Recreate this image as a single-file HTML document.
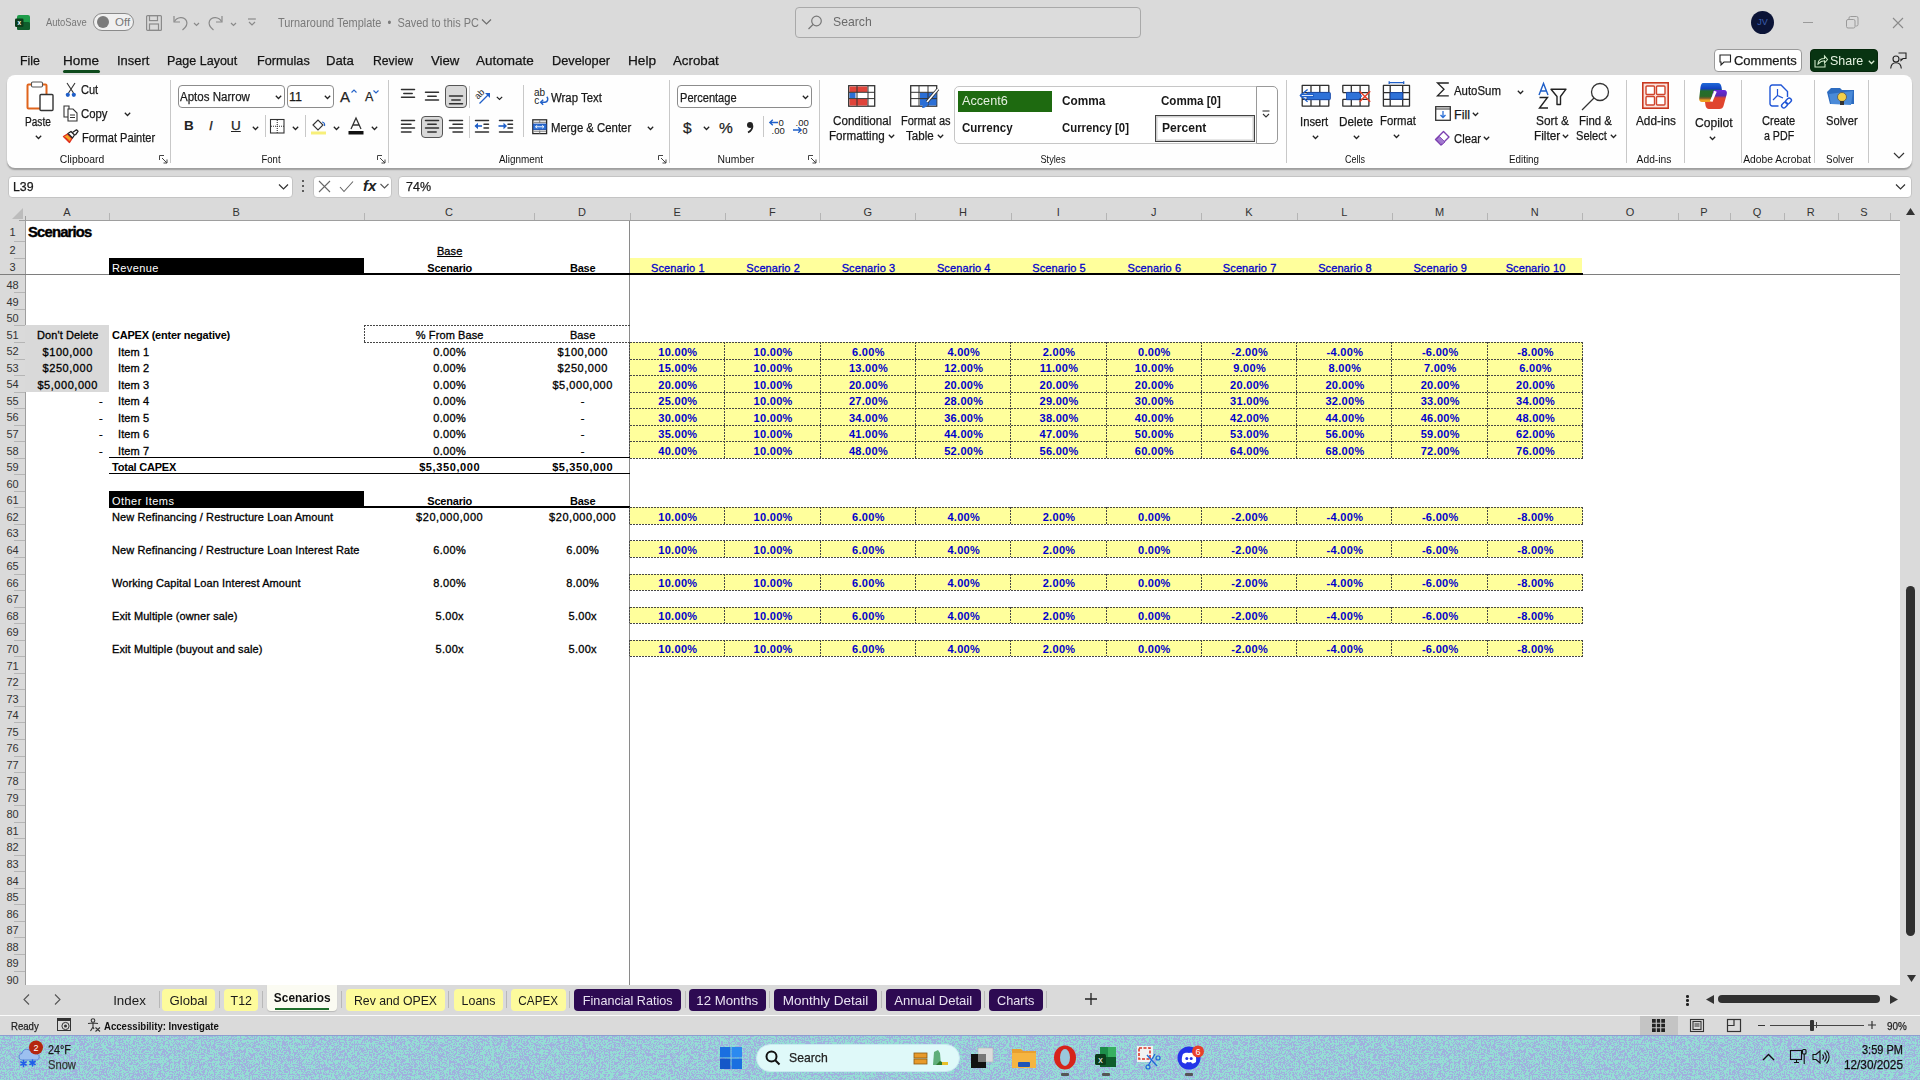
<!DOCTYPE html><html><head><meta charset="utf-8"><style>
html,body{margin:0;padding:0;width:1920px;height:1080px;overflow:hidden;background:#dadada;font-family:"Liberation Sans", sans-serif;}
div{box-sizing:border-box;}
.t{position:absolute;white-space:nowrap;line-height:1;}
svg{position:absolute;overflow:visible;}
</style></head><body>
<div style="position:absolute;left:25px;top:220.5px;width:1875px;height:764.5px;background:#fff;"></div>
<div class="t" style="left:25px;top:207px;width:84px;text-align:center;font-size:11px;color:#333;">A</div>
<div style="position:absolute;left:109px;top:213px;width:1px;height:7.5px;background:#b5b5b5;"></div>
<div class="t" style="left:109px;top:207px;width:254.5px;text-align:center;font-size:11px;color:#333;">B</div>
<div style="position:absolute;left:364px;top:213px;width:1px;height:7.5px;background:#b5b5b5;"></div>
<div class="t" style="left:363.5px;top:207px;width:171.0px;text-align:center;font-size:11px;color:#333;">C</div>
<div style="position:absolute;left:534px;top:213px;width:1px;height:7.5px;background:#b5b5b5;"></div>
<div class="t" style="left:534.5px;top:207px;width:95.0px;text-align:center;font-size:11px;color:#333;">D</div>
<div style="position:absolute;left:630px;top:213px;width:1px;height:7.5px;background:#b5b5b5;"></div>
<div class="t" style="left:629.5px;top:207px;width:95.29999999999995px;text-align:center;font-size:11px;color:#333;">E</div>
<div style="position:absolute;left:725px;top:213px;width:1px;height:7.5px;background:#b5b5b5;"></div>
<div class="t" style="left:724.8px;top:207px;width:95.30000000000007px;text-align:center;font-size:11px;color:#333;">F</div>
<div style="position:absolute;left:820px;top:213px;width:1px;height:7.5px;background:#b5b5b5;"></div>
<div class="t" style="left:820.1px;top:207px;width:95.29999999999995px;text-align:center;font-size:11px;color:#333;">G</div>
<div style="position:absolute;left:915px;top:213px;width:1px;height:7.5px;background:#b5b5b5;"></div>
<div class="t" style="left:915.4px;top:207px;width:95.30000000000007px;text-align:center;font-size:11px;color:#333;">H</div>
<div style="position:absolute;left:1011px;top:213px;width:1px;height:7.5px;background:#b5b5b5;"></div>
<div class="t" style="left:1010.7px;top:207px;width:95.29999999999995px;text-align:center;font-size:11px;color:#333;">I</div>
<div style="position:absolute;left:1106px;top:213px;width:1px;height:7.5px;background:#b5b5b5;"></div>
<div class="t" style="left:1106.0px;top:207px;width:95.29999999999995px;text-align:center;font-size:11px;color:#333;">J</div>
<div style="position:absolute;left:1201px;top:213px;width:1px;height:7.5px;background:#b5b5b5;"></div>
<div class="t" style="left:1201.3px;top:207px;width:95.29999999999995px;text-align:center;font-size:11px;color:#333;">K</div>
<div style="position:absolute;left:1297px;top:213px;width:1px;height:7.5px;background:#b5b5b5;"></div>
<div class="t" style="left:1296.6px;top:207px;width:95.30000000000018px;text-align:center;font-size:11px;color:#333;">L</div>
<div style="position:absolute;left:1392px;top:213px;width:1px;height:7.5px;background:#b5b5b5;"></div>
<div class="t" style="left:1391.9px;top:207px;width:95.29999999999973px;text-align:center;font-size:11px;color:#333;">M</div>
<div style="position:absolute;left:1487px;top:213px;width:1px;height:7.5px;background:#b5b5b5;"></div>
<div class="t" style="left:1487.1999999999998px;top:207px;width:95.30000000000018px;text-align:center;font-size:11px;color:#333;">N</div>
<div style="position:absolute;left:1582px;top:213px;width:1px;height:7.5px;background:#b5b5b5;"></div>
<div class="t" style="left:1582.5px;top:207px;width:95.09999999999991px;text-align:center;font-size:11px;color:#333;">O</div>
<div style="position:absolute;left:1678px;top:213px;width:1px;height:7.5px;background:#b5b5b5;"></div>
<div class="t" style="left:1677.6px;top:207px;width:52.80000000000018px;text-align:center;font-size:11px;color:#333;">P</div>
<div style="position:absolute;left:1730px;top:213px;width:1px;height:7.5px;background:#b5b5b5;"></div>
<div class="t" style="left:1730.4px;top:207px;width:53.299999999999955px;text-align:center;font-size:11px;color:#333;">Q</div>
<div style="position:absolute;left:1784px;top:213px;width:1px;height:7.5px;background:#b5b5b5;"></div>
<div class="t" style="left:1783.7px;top:207px;width:53.899999999999864px;text-align:center;font-size:11px;color:#333;">R</div>
<div style="position:absolute;left:1838px;top:213px;width:1px;height:7.5px;background:#b5b5b5;"></div>
<div class="t" style="left:1837.6px;top:207px;width:52.90000000000009px;text-align:center;font-size:11px;color:#333;">S</div>
<div style="position:absolute;left:1890px;top:213px;width:1px;height:7.5px;background:#b5b5b5;"></div>
<div style="position:absolute;left:19px;top:220px;width:1881px;height:1px;background:#9e9e9e;"></div>
<div style="position:absolute;left:25px;top:216px;width:1px;height:5px;background:#9e9e9e;"></div>
<svg style="left:12px;top:208px" width="11" height="11"><polygon points="11,0 11,11 0,11" fill="#bcbcbc"/></svg>
<div style="position:absolute;left:25px;top:220px;width:1px;height:765px;background:#9e9e9e;"></div>
<div class="t" style="left:0px;top:226.75px;width:25px;text-align:center;font-size:11px;color:#333;">1</div>
<div style="position:absolute;left:14px;top:241px;width:11px;height:1px;background:#b5b5b5;"></div>
<div class="t" style="left:0px;top:245.25px;width:25px;text-align:center;font-size:11px;color:#333;">2</div>
<div style="position:absolute;left:14px;top:258px;width:11px;height:1px;background:#b5b5b5;"></div>
<div class="t" style="left:0px;top:262.00px;width:25px;text-align:center;font-size:11px;color:#333;">3</div>
<div style="position:absolute;left:0px;top:274px;width:25px;height:1px;background:#b5b5b5;"></div>
<div class="t" style="left:0px;top:280.13px;width:25px;text-align:center;font-size:11px;color:#333;">48</div>
<div style="position:absolute;left:14px;top:292px;width:11px;height:1px;background:#b5b5b5;"></div>
<div class="t" style="left:0px;top:296.67px;width:25px;text-align:center;font-size:11px;color:#333;">49</div>
<div style="position:absolute;left:14px;top:309px;width:11px;height:1px;background:#b5b5b5;"></div>
<div class="t" style="left:0px;top:313.21px;width:25px;text-align:center;font-size:11px;color:#333;">50</div>
<div style="position:absolute;left:14px;top:325px;width:11px;height:1px;background:#b5b5b5;"></div>
<div class="t" style="left:0px;top:329.75px;width:25px;text-align:center;font-size:11px;color:#333;">51</div>
<div style="position:absolute;left:14px;top:342px;width:11px;height:1px;background:#b5b5b5;"></div>
<div class="t" style="left:0px;top:346.29px;width:25px;text-align:center;font-size:11px;color:#333;">52</div>
<div style="position:absolute;left:14px;top:359px;width:11px;height:1px;background:#b5b5b5;"></div>
<div class="t" style="left:0px;top:362.83px;width:25px;text-align:center;font-size:11px;color:#333;">53</div>
<div style="position:absolute;left:14px;top:375px;width:11px;height:1px;background:#b5b5b5;"></div>
<div class="t" style="left:0px;top:379.37px;width:25px;text-align:center;font-size:11px;color:#333;">54</div>
<div style="position:absolute;left:14px;top:392px;width:11px;height:1px;background:#b5b5b5;"></div>
<div class="t" style="left:0px;top:395.91px;width:25px;text-align:center;font-size:11px;color:#333;">55</div>
<div style="position:absolute;left:14px;top:408px;width:11px;height:1px;background:#b5b5b5;"></div>
<div class="t" style="left:0px;top:412.45px;width:25px;text-align:center;font-size:11px;color:#333;">56</div>
<div style="position:absolute;left:14px;top:425px;width:11px;height:1px;background:#b5b5b5;"></div>
<div class="t" style="left:0px;top:428.99px;width:25px;text-align:center;font-size:11px;color:#333;">57</div>
<div style="position:absolute;left:14px;top:441px;width:11px;height:1px;background:#b5b5b5;"></div>
<div class="t" style="left:0px;top:445.53px;width:25px;text-align:center;font-size:11px;color:#333;">58</div>
<div style="position:absolute;left:14px;top:458px;width:11px;height:1px;background:#b5b5b5;"></div>
<div class="t" style="left:0px;top:462.07px;width:25px;text-align:center;font-size:11px;color:#333;">59</div>
<div style="position:absolute;left:14px;top:474px;width:11px;height:1px;background:#b5b5b5;"></div>
<div class="t" style="left:0px;top:478.61px;width:25px;text-align:center;font-size:11px;color:#333;">60</div>
<div style="position:absolute;left:14px;top:491px;width:11px;height:1px;background:#b5b5b5;"></div>
<div class="t" style="left:0px;top:495.15px;width:25px;text-align:center;font-size:11px;color:#333;">61</div>
<div style="position:absolute;left:14px;top:507px;width:11px;height:1px;background:#b5b5b5;"></div>
<div class="t" style="left:0px;top:511.69px;width:25px;text-align:center;font-size:11px;color:#333;">62</div>
<div style="position:absolute;left:14px;top:524px;width:11px;height:1px;background:#b5b5b5;"></div>
<div class="t" style="left:0px;top:528.23px;width:25px;text-align:center;font-size:11px;color:#333;">63</div>
<div style="position:absolute;left:14px;top:540px;width:11px;height:1px;background:#b5b5b5;"></div>
<div class="t" style="left:0px;top:544.77px;width:25px;text-align:center;font-size:11px;color:#333;">64</div>
<div style="position:absolute;left:14px;top:557px;width:11px;height:1px;background:#b5b5b5;"></div>
<div class="t" style="left:0px;top:561.31px;width:25px;text-align:center;font-size:11px;color:#333;">65</div>
<div style="position:absolute;left:14px;top:574px;width:11px;height:1px;background:#b5b5b5;"></div>
<div class="t" style="left:0px;top:577.85px;width:25px;text-align:center;font-size:11px;color:#333;">66</div>
<div style="position:absolute;left:14px;top:590px;width:11px;height:1px;background:#b5b5b5;"></div>
<div class="t" style="left:0px;top:594.39px;width:25px;text-align:center;font-size:11px;color:#333;">67</div>
<div style="position:absolute;left:14px;top:607px;width:11px;height:1px;background:#b5b5b5;"></div>
<div class="t" style="left:0px;top:610.93px;width:25px;text-align:center;font-size:11px;color:#333;">68</div>
<div style="position:absolute;left:14px;top:623px;width:11px;height:1px;background:#b5b5b5;"></div>
<div class="t" style="left:0px;top:627.47px;width:25px;text-align:center;font-size:11px;color:#333;">69</div>
<div style="position:absolute;left:14px;top:640px;width:11px;height:1px;background:#b5b5b5;"></div>
<div class="t" style="left:0px;top:644.01px;width:25px;text-align:center;font-size:11px;color:#333;">70</div>
<div style="position:absolute;left:14px;top:656px;width:11px;height:1px;background:#b5b5b5;"></div>
<div class="t" style="left:0px;top:660.55px;width:25px;text-align:center;font-size:11px;color:#333;">71</div>
<div style="position:absolute;left:14px;top:673px;width:11px;height:1px;background:#b5b5b5;"></div>
<div class="t" style="left:0px;top:677.09px;width:25px;text-align:center;font-size:11px;color:#333;">72</div>
<div style="position:absolute;left:14px;top:689px;width:11px;height:1px;background:#b5b5b5;"></div>
<div class="t" style="left:0px;top:693.63px;width:25px;text-align:center;font-size:11px;color:#333;">73</div>
<div style="position:absolute;left:14px;top:706px;width:11px;height:1px;background:#b5b5b5;"></div>
<div class="t" style="left:0px;top:710.17px;width:25px;text-align:center;font-size:11px;color:#333;">74</div>
<div style="position:absolute;left:14px;top:722px;width:11px;height:1px;background:#b5b5b5;"></div>
<div class="t" style="left:0px;top:726.71px;width:25px;text-align:center;font-size:11px;color:#333;">75</div>
<div style="position:absolute;left:14px;top:739px;width:11px;height:1px;background:#b5b5b5;"></div>
<div class="t" style="left:0px;top:743.25px;width:25px;text-align:center;font-size:11px;color:#333;">76</div>
<div style="position:absolute;left:14px;top:756px;width:11px;height:1px;background:#b5b5b5;"></div>
<div class="t" style="left:0px;top:759.79px;width:25px;text-align:center;font-size:11px;color:#333;">77</div>
<div style="position:absolute;left:14px;top:772px;width:11px;height:1px;background:#b5b5b5;"></div>
<div class="t" style="left:0px;top:776.33px;width:25px;text-align:center;font-size:11px;color:#333;">78</div>
<div style="position:absolute;left:14px;top:789px;width:11px;height:1px;background:#b5b5b5;"></div>
<div class="t" style="left:0px;top:792.87px;width:25px;text-align:center;font-size:11px;color:#333;">79</div>
<div style="position:absolute;left:14px;top:805px;width:11px;height:1px;background:#b5b5b5;"></div>
<div class="t" style="left:0px;top:809.41px;width:25px;text-align:center;font-size:11px;color:#333;">80</div>
<div style="position:absolute;left:14px;top:822px;width:11px;height:1px;background:#b5b5b5;"></div>
<div class="t" style="left:0px;top:825.95px;width:25px;text-align:center;font-size:11px;color:#333;">81</div>
<div style="position:absolute;left:14px;top:838px;width:11px;height:1px;background:#b5b5b5;"></div>
<div class="t" style="left:0px;top:842.49px;width:25px;text-align:center;font-size:11px;color:#333;">82</div>
<div style="position:absolute;left:14px;top:855px;width:11px;height:1px;background:#b5b5b5;"></div>
<div class="t" style="left:0px;top:859.03px;width:25px;text-align:center;font-size:11px;color:#333;">83</div>
<div style="position:absolute;left:14px;top:871px;width:11px;height:1px;background:#b5b5b5;"></div>
<div class="t" style="left:0px;top:875.57px;width:25px;text-align:center;font-size:11px;color:#333;">84</div>
<div style="position:absolute;left:14px;top:888px;width:11px;height:1px;background:#b5b5b5;"></div>
<div class="t" style="left:0px;top:892.11px;width:25px;text-align:center;font-size:11px;color:#333;">85</div>
<div style="position:absolute;left:14px;top:904px;width:11px;height:1px;background:#b5b5b5;"></div>
<div class="t" style="left:0px;top:908.65px;width:25px;text-align:center;font-size:11px;color:#333;">86</div>
<div style="position:absolute;left:14px;top:921px;width:11px;height:1px;background:#b5b5b5;"></div>
<div class="t" style="left:0px;top:925.19px;width:25px;text-align:center;font-size:11px;color:#333;">87</div>
<div style="position:absolute;left:14px;top:937px;width:11px;height:1px;background:#b5b5b5;"></div>
<div class="t" style="left:0px;top:941.73px;width:25px;text-align:center;font-size:11px;color:#333;">88</div>
<div style="position:absolute;left:14px;top:954px;width:11px;height:1px;background:#b5b5b5;"></div>
<div class="t" style="left:0px;top:958.27px;width:25px;text-align:center;font-size:11px;color:#333;">89</div>
<div style="position:absolute;left:14px;top:971px;width:11px;height:1px;background:#b5b5b5;"></div>
<div class="t" style="left:0px;top:974.81px;width:25px;text-align:center;font-size:11px;color:#333;">90</div>
<div style="position:absolute;left:0px;top:274px;width:1900px;height:1.3px;background:#7e7e7e;"></div>
<div style="position:absolute;left:629px;top:220.5px;width:1px;height:764.5px;background:#8a8a8a;"></div>
<div class="t" style="left:28.00px;top:229.10px;width:78.00px;text-align:left;font-size:14.8px;color:#000;font-weight:bold;letter-spacing:-0.8px;top:224.8px;-webkit-text-stroke:0.4px #000;">Scenarios</div>
<div class="t" style="left:367.20px;top:245.60px;width:165.00px;text-align:center;font-size:11px;color:#000;font-weight:normal;letter-spacing:0.1px;-webkit-text-stroke:0.3px #000;text-decoration:underline;">Base</div>
<div style="position:absolute;left:109.00px;top:257.50px;width:254.50px;height:17.00px;background:#000;"></div>
<div class="t" style="left:112.00px;top:262.60px;width:248.50px;text-align:left;font-size:11px;color:#fff;font-weight:normal;letter-spacing:0.4px;">Revenue</div>
<div class="t" style="left:367.20px;top:262.60px;width:165.00px;text-align:center;font-size:11px;color:#000;font-weight:bold;letter-spacing:-0.22px;">Scenario</div>
<div class="t" style="left:538.20px;top:262.60px;width:89.00px;text-align:center;font-size:11px;color:#000;font-weight:bold;letter-spacing:-0.22px;">Base</div>
<div style="position:absolute;left:629.50px;top:257.50px;width:95.30px;height:17.00px;background:#ffff9c;"></div>
<div class="t" style="left:633.20px;top:262.60px;width:89.30px;text-align:center;font-size:11px;color:#0000cc;font-weight:normal;letter-spacing:0.1px;-webkit-text-stroke:0.3px #0000cc;">Scenario 1</div>
<div style="position:absolute;left:724.80px;top:257.50px;width:95.30px;height:17.00px;background:#ffff9c;"></div>
<div class="t" style="left:728.50px;top:262.60px;width:89.30px;text-align:center;font-size:11px;color:#0000cc;font-weight:normal;letter-spacing:0.1px;-webkit-text-stroke:0.3px #0000cc;">Scenario 2</div>
<div style="position:absolute;left:820.10px;top:257.50px;width:95.30px;height:17.00px;background:#ffff9c;"></div>
<div class="t" style="left:823.80px;top:262.60px;width:89.30px;text-align:center;font-size:11px;color:#0000cc;font-weight:normal;letter-spacing:0.1px;-webkit-text-stroke:0.3px #0000cc;">Scenario 3</div>
<div style="position:absolute;left:915.40px;top:257.50px;width:95.30px;height:17.00px;background:#ffff9c;"></div>
<div class="t" style="left:919.10px;top:262.60px;width:89.30px;text-align:center;font-size:11px;color:#0000cc;font-weight:normal;letter-spacing:0.1px;-webkit-text-stroke:0.3px #0000cc;">Scenario 4</div>
<div style="position:absolute;left:1010.70px;top:257.50px;width:95.30px;height:17.00px;background:#ffff9c;"></div>
<div class="t" style="left:1014.40px;top:262.60px;width:89.30px;text-align:center;font-size:11px;color:#0000cc;font-weight:normal;letter-spacing:0.1px;-webkit-text-stroke:0.3px #0000cc;">Scenario 5</div>
<div style="position:absolute;left:1106.00px;top:257.50px;width:95.30px;height:17.00px;background:#ffff9c;"></div>
<div class="t" style="left:1109.70px;top:262.60px;width:89.30px;text-align:center;font-size:11px;color:#0000cc;font-weight:normal;letter-spacing:0.1px;-webkit-text-stroke:0.3px #0000cc;">Scenario 6</div>
<div style="position:absolute;left:1201.30px;top:257.50px;width:95.30px;height:17.00px;background:#ffff9c;"></div>
<div class="t" style="left:1205.00px;top:262.60px;width:89.30px;text-align:center;font-size:11px;color:#0000cc;font-weight:normal;letter-spacing:0.1px;-webkit-text-stroke:0.3px #0000cc;">Scenario 7</div>
<div style="position:absolute;left:1296.60px;top:257.50px;width:95.30px;height:17.00px;background:#ffff9c;"></div>
<div class="t" style="left:1300.30px;top:262.60px;width:89.30px;text-align:center;font-size:11px;color:#0000cc;font-weight:normal;letter-spacing:0.1px;-webkit-text-stroke:0.3px #0000cc;">Scenario 8</div>
<div style="position:absolute;left:1391.90px;top:257.50px;width:95.30px;height:17.00px;background:#ffff9c;"></div>
<div class="t" style="left:1395.60px;top:262.60px;width:89.30px;text-align:center;font-size:11px;color:#0000cc;font-weight:normal;letter-spacing:0.1px;-webkit-text-stroke:0.3px #0000cc;">Scenario 9</div>
<div style="position:absolute;left:1487.20px;top:257.50px;width:95.30px;height:17.00px;background:#ffff9c;"></div>
<div class="t" style="left:1490.90px;top:262.60px;width:89.30px;text-align:center;font-size:11px;color:#0000cc;font-weight:normal;letter-spacing:0.1px;-webkit-text-stroke:0.3px #0000cc;">Scenario 10</div>
<div style="position:absolute;left:109px;top:273px;width:1473.5px;height:2px;background:#000;"></div>
<div style="position:absolute;left:25.00px;top:325.48px;width:84.00px;height:16.54px;background:#d9d9d9;"></div>
<div class="t" style="left:28.70px;top:330.12px;width:78.00px;text-align:center;font-size:11px;color:#000;font-weight:normal;letter-spacing:0.1px;-webkit-text-stroke:0.3px #000;">Don't Delete</div>
<div style="position:absolute;left:25.00px;top:342.02px;width:84.00px;height:16.54px;background:#d9d9d9;"></div>
<div class="t" style="left:28.70px;top:346.66px;width:78.00px;text-align:center;font-size:11px;color:#000;font-weight:normal;letter-spacing:0.55px;-webkit-text-stroke:0.3px #000;">$100,000</div>
<div style="position:absolute;left:25.00px;top:358.56px;width:84.00px;height:16.54px;background:#d9d9d9;"></div>
<div class="t" style="left:28.70px;top:363.20px;width:78.00px;text-align:center;font-size:11px;color:#000;font-weight:normal;letter-spacing:0.55px;-webkit-text-stroke:0.3px #000;">$250,000</div>
<div style="position:absolute;left:25.00px;top:375.10px;width:84.00px;height:16.54px;background:#d9d9d9;"></div>
<div class="t" style="left:28.70px;top:379.74px;width:78.00px;text-align:center;font-size:11px;color:#000;font-weight:normal;letter-spacing:0.55px;-webkit-text-stroke:0.3px #000;">$5,000,000</div>
<div class="t" style="left:31.00px;top:396.28px;width:72.00px;text-align:right;font-size:11px;color:#000;font-weight:normal;letter-spacing:0.3px;-webkit-text-stroke:0.3px #000;">-</div>
<div class="t" style="left:31.00px;top:412.82px;width:72.00px;text-align:right;font-size:11px;color:#000;font-weight:normal;letter-spacing:0.3px;-webkit-text-stroke:0.3px #000;">-</div>
<div class="t" style="left:31.00px;top:429.36px;width:72.00px;text-align:right;font-size:11px;color:#000;font-weight:normal;letter-spacing:0.3px;-webkit-text-stroke:0.3px #000;">-</div>
<div class="t" style="left:31.00px;top:445.90px;width:72.00px;text-align:right;font-size:11px;color:#000;font-weight:normal;letter-spacing:0.3px;-webkit-text-stroke:0.3px #000;">-</div>
<div class="t" style="left:112.00px;top:330.12px;width:248.50px;text-align:left;font-size:11px;color:#000;font-weight:bold;letter-spacing:-0.22px;">CAPEX (enter negative)</div>
<div class="t" style="left:367.20px;top:330.12px;width:165.00px;text-align:center;font-size:11px;color:#000;font-weight:normal;letter-spacing:0.1px;-webkit-text-stroke:0.3px #000;">% From Base</div>
<div class="t" style="left:538.20px;top:330.12px;width:89.00px;text-align:center;font-size:11px;color:#000;font-weight:normal;letter-spacing:0.1px;-webkit-text-stroke:0.3px #000;">Base</div>
<div class="t" style="left:118.00px;top:346.66px;width:236.50px;text-align:left;font-size:11px;color:#000;font-weight:normal;letter-spacing:0.1px;-webkit-text-stroke:0.3px #000;">Item 1</div>
<div class="t" style="left:367.20px;top:346.66px;width:165.00px;text-align:center;font-size:11px;color:#000;font-weight:normal;letter-spacing:0.3px;-webkit-text-stroke:0.3px #000;">0.00%</div>
<div class="t" style="left:538.20px;top:346.66px;width:89.00px;text-align:center;font-size:11px;color:#000;font-weight:normal;letter-spacing:0.55px;-webkit-text-stroke:0.3px #000;">$100,000</div>
<div class="t" style="left:118.00px;top:363.20px;width:236.50px;text-align:left;font-size:11px;color:#000;font-weight:normal;letter-spacing:0.1px;-webkit-text-stroke:0.3px #000;">Item 2</div>
<div class="t" style="left:367.20px;top:363.20px;width:165.00px;text-align:center;font-size:11px;color:#000;font-weight:normal;letter-spacing:0.3px;-webkit-text-stroke:0.3px #000;">0.00%</div>
<div class="t" style="left:538.20px;top:363.20px;width:89.00px;text-align:center;font-size:11px;color:#000;font-weight:normal;letter-spacing:0.55px;-webkit-text-stroke:0.3px #000;">$250,000</div>
<div class="t" style="left:118.00px;top:379.74px;width:236.50px;text-align:left;font-size:11px;color:#000;font-weight:normal;letter-spacing:0.1px;-webkit-text-stroke:0.3px #000;">Item 3</div>
<div class="t" style="left:367.20px;top:379.74px;width:165.00px;text-align:center;font-size:11px;color:#000;font-weight:normal;letter-spacing:0.3px;-webkit-text-stroke:0.3px #000;">0.00%</div>
<div class="t" style="left:538.20px;top:379.74px;width:89.00px;text-align:center;font-size:11px;color:#000;font-weight:normal;letter-spacing:0.55px;-webkit-text-stroke:0.3px #000;">$5,000,000</div>
<div class="t" style="left:118.00px;top:396.28px;width:236.50px;text-align:left;font-size:11px;color:#000;font-weight:normal;letter-spacing:0.1px;-webkit-text-stroke:0.3px #000;">Item 4</div>
<div class="t" style="left:367.20px;top:396.28px;width:165.00px;text-align:center;font-size:11px;color:#000;font-weight:normal;letter-spacing:0.3px;-webkit-text-stroke:0.3px #000;">0.00%</div>
<div class="t" style="left:538.20px;top:396.28px;width:89.00px;text-align:center;font-size:11px;color:#000;font-weight:normal;letter-spacing:0.3px;-webkit-text-stroke:0.3px #000;">-</div>
<div class="t" style="left:118.00px;top:412.82px;width:236.50px;text-align:left;font-size:11px;color:#000;font-weight:normal;letter-spacing:0.1px;-webkit-text-stroke:0.3px #000;">Item 5</div>
<div class="t" style="left:367.20px;top:412.82px;width:165.00px;text-align:center;font-size:11px;color:#000;font-weight:normal;letter-spacing:0.3px;-webkit-text-stroke:0.3px #000;">0.00%</div>
<div class="t" style="left:538.20px;top:412.82px;width:89.00px;text-align:center;font-size:11px;color:#000;font-weight:normal;letter-spacing:0.3px;-webkit-text-stroke:0.3px #000;">-</div>
<div class="t" style="left:118.00px;top:429.36px;width:236.50px;text-align:left;font-size:11px;color:#000;font-weight:normal;letter-spacing:0.1px;-webkit-text-stroke:0.3px #000;">Item 6</div>
<div class="t" style="left:367.20px;top:429.36px;width:165.00px;text-align:center;font-size:11px;color:#000;font-weight:normal;letter-spacing:0.3px;-webkit-text-stroke:0.3px #000;">0.00%</div>
<div class="t" style="left:538.20px;top:429.36px;width:89.00px;text-align:center;font-size:11px;color:#000;font-weight:normal;letter-spacing:0.3px;-webkit-text-stroke:0.3px #000;">-</div>
<div class="t" style="left:118.00px;top:445.90px;width:236.50px;text-align:left;font-size:11px;color:#000;font-weight:normal;letter-spacing:0.1px;-webkit-text-stroke:0.3px #000;">Item 7</div>
<div class="t" style="left:367.20px;top:445.90px;width:165.00px;text-align:center;font-size:11px;color:#000;font-weight:normal;letter-spacing:0.3px;-webkit-text-stroke:0.3px #000;">0.00%</div>
<div class="t" style="left:538.20px;top:445.90px;width:89.00px;text-align:center;font-size:11px;color:#000;font-weight:normal;letter-spacing:0.3px;-webkit-text-stroke:0.3px #000;">-</div>
<div style="position:absolute;left:629.5px;top:342.02px;width:953.0px;height:16.54000000000002px;background:#ffff9c;"></div>
<div class="t" style="left:633.20px;top:346.66px;width:89.30px;text-align:center;font-size:11px;color:#0000cc;font-weight:bold;letter-spacing:0.3px;">10.00%</div>
<div class="t" style="left:728.50px;top:346.66px;width:89.30px;text-align:center;font-size:11px;color:#0000cc;font-weight:bold;letter-spacing:0.3px;">10.00%</div>
<div class="t" style="left:823.80px;top:346.66px;width:89.30px;text-align:center;font-size:11px;color:#0000cc;font-weight:bold;letter-spacing:0.3px;">6.00%</div>
<div class="t" style="left:919.10px;top:346.66px;width:89.30px;text-align:center;font-size:11px;color:#0000cc;font-weight:bold;letter-spacing:0.3px;">4.00%</div>
<div class="t" style="left:1014.40px;top:346.66px;width:89.30px;text-align:center;font-size:11px;color:#0000cc;font-weight:bold;letter-spacing:0.3px;">2.00%</div>
<div class="t" style="left:1109.70px;top:346.66px;width:89.30px;text-align:center;font-size:11px;color:#0000cc;font-weight:bold;letter-spacing:0.3px;">0.00%</div>
<div class="t" style="left:1205.00px;top:346.66px;width:89.30px;text-align:center;font-size:11px;color:#0000cc;font-weight:bold;letter-spacing:0.3px;">-2.00%</div>
<div class="t" style="left:1300.30px;top:346.66px;width:89.30px;text-align:center;font-size:11px;color:#0000cc;font-weight:bold;letter-spacing:0.3px;">-4.00%</div>
<div class="t" style="left:1395.60px;top:346.66px;width:89.30px;text-align:center;font-size:11px;color:#0000cc;font-weight:bold;letter-spacing:0.3px;">-6.00%</div>
<div class="t" style="left:1490.90px;top:346.66px;width:89.30px;text-align:center;font-size:11px;color:#0000cc;font-weight:bold;letter-spacing:0.3px;">-8.00%</div>
<div style="position:absolute;left:629.5px;top:358.56px;width:953.0px;height:16.54000000000002px;background:#ffff9c;"></div>
<div class="t" style="left:633.20px;top:363.20px;width:89.30px;text-align:center;font-size:11px;color:#0000cc;font-weight:bold;letter-spacing:0.3px;">15.00%</div>
<div class="t" style="left:728.50px;top:363.20px;width:89.30px;text-align:center;font-size:11px;color:#0000cc;font-weight:bold;letter-spacing:0.3px;">10.00%</div>
<div class="t" style="left:823.80px;top:363.20px;width:89.30px;text-align:center;font-size:11px;color:#0000cc;font-weight:bold;letter-spacing:0.3px;">13.00%</div>
<div class="t" style="left:919.10px;top:363.20px;width:89.30px;text-align:center;font-size:11px;color:#0000cc;font-weight:bold;letter-spacing:0.3px;">12.00%</div>
<div class="t" style="left:1014.40px;top:363.20px;width:89.30px;text-align:center;font-size:11px;color:#0000cc;font-weight:bold;letter-spacing:0.3px;">11.00%</div>
<div class="t" style="left:1109.70px;top:363.20px;width:89.30px;text-align:center;font-size:11px;color:#0000cc;font-weight:bold;letter-spacing:0.3px;">10.00%</div>
<div class="t" style="left:1205.00px;top:363.20px;width:89.30px;text-align:center;font-size:11px;color:#0000cc;font-weight:bold;letter-spacing:0.3px;">9.00%</div>
<div class="t" style="left:1300.30px;top:363.20px;width:89.30px;text-align:center;font-size:11px;color:#0000cc;font-weight:bold;letter-spacing:0.3px;">8.00%</div>
<div class="t" style="left:1395.60px;top:363.20px;width:89.30px;text-align:center;font-size:11px;color:#0000cc;font-weight:bold;letter-spacing:0.3px;">7.00%</div>
<div class="t" style="left:1490.90px;top:363.20px;width:89.30px;text-align:center;font-size:11px;color:#0000cc;font-weight:bold;letter-spacing:0.3px;">6.00%</div>
<div style="position:absolute;left:629.5px;top:375.1px;width:953.0px;height:16.54000000000002px;background:#ffff9c;"></div>
<div class="t" style="left:633.20px;top:379.74px;width:89.30px;text-align:center;font-size:11px;color:#0000cc;font-weight:bold;letter-spacing:0.3px;">20.00%</div>
<div class="t" style="left:728.50px;top:379.74px;width:89.30px;text-align:center;font-size:11px;color:#0000cc;font-weight:bold;letter-spacing:0.3px;">10.00%</div>
<div class="t" style="left:823.80px;top:379.74px;width:89.30px;text-align:center;font-size:11px;color:#0000cc;font-weight:bold;letter-spacing:0.3px;">20.00%</div>
<div class="t" style="left:919.10px;top:379.74px;width:89.30px;text-align:center;font-size:11px;color:#0000cc;font-weight:bold;letter-spacing:0.3px;">20.00%</div>
<div class="t" style="left:1014.40px;top:379.74px;width:89.30px;text-align:center;font-size:11px;color:#0000cc;font-weight:bold;letter-spacing:0.3px;">20.00%</div>
<div class="t" style="left:1109.70px;top:379.74px;width:89.30px;text-align:center;font-size:11px;color:#0000cc;font-weight:bold;letter-spacing:0.3px;">20.00%</div>
<div class="t" style="left:1205.00px;top:379.74px;width:89.30px;text-align:center;font-size:11px;color:#0000cc;font-weight:bold;letter-spacing:0.3px;">20.00%</div>
<div class="t" style="left:1300.30px;top:379.74px;width:89.30px;text-align:center;font-size:11px;color:#0000cc;font-weight:bold;letter-spacing:0.3px;">20.00%</div>
<div class="t" style="left:1395.60px;top:379.74px;width:89.30px;text-align:center;font-size:11px;color:#0000cc;font-weight:bold;letter-spacing:0.3px;">20.00%</div>
<div class="t" style="left:1490.90px;top:379.74px;width:89.30px;text-align:center;font-size:11px;color:#0000cc;font-weight:bold;letter-spacing:0.3px;">20.00%</div>
<div style="position:absolute;left:629.5px;top:391.64px;width:953.0px;height:16.54000000000002px;background:#ffff9c;"></div>
<div class="t" style="left:633.20px;top:396.28px;width:89.30px;text-align:center;font-size:11px;color:#0000cc;font-weight:bold;letter-spacing:0.3px;">25.00%</div>
<div class="t" style="left:728.50px;top:396.28px;width:89.30px;text-align:center;font-size:11px;color:#0000cc;font-weight:bold;letter-spacing:0.3px;">10.00%</div>
<div class="t" style="left:823.80px;top:396.28px;width:89.30px;text-align:center;font-size:11px;color:#0000cc;font-weight:bold;letter-spacing:0.3px;">27.00%</div>
<div class="t" style="left:919.10px;top:396.28px;width:89.30px;text-align:center;font-size:11px;color:#0000cc;font-weight:bold;letter-spacing:0.3px;">28.00%</div>
<div class="t" style="left:1014.40px;top:396.28px;width:89.30px;text-align:center;font-size:11px;color:#0000cc;font-weight:bold;letter-spacing:0.3px;">29.00%</div>
<div class="t" style="left:1109.70px;top:396.28px;width:89.30px;text-align:center;font-size:11px;color:#0000cc;font-weight:bold;letter-spacing:0.3px;">30.00%</div>
<div class="t" style="left:1205.00px;top:396.28px;width:89.30px;text-align:center;font-size:11px;color:#0000cc;font-weight:bold;letter-spacing:0.3px;">31.00%</div>
<div class="t" style="left:1300.30px;top:396.28px;width:89.30px;text-align:center;font-size:11px;color:#0000cc;font-weight:bold;letter-spacing:0.3px;">32.00%</div>
<div class="t" style="left:1395.60px;top:396.28px;width:89.30px;text-align:center;font-size:11px;color:#0000cc;font-weight:bold;letter-spacing:0.3px;">33.00%</div>
<div class="t" style="left:1490.90px;top:396.28px;width:89.30px;text-align:center;font-size:11px;color:#0000cc;font-weight:bold;letter-spacing:0.3px;">34.00%</div>
<div style="position:absolute;left:629.5px;top:408.18px;width:953.0px;height:16.54000000000002px;background:#ffff9c;"></div>
<div class="t" style="left:633.20px;top:412.82px;width:89.30px;text-align:center;font-size:11px;color:#0000cc;font-weight:bold;letter-spacing:0.3px;">30.00%</div>
<div class="t" style="left:728.50px;top:412.82px;width:89.30px;text-align:center;font-size:11px;color:#0000cc;font-weight:bold;letter-spacing:0.3px;">10.00%</div>
<div class="t" style="left:823.80px;top:412.82px;width:89.30px;text-align:center;font-size:11px;color:#0000cc;font-weight:bold;letter-spacing:0.3px;">34.00%</div>
<div class="t" style="left:919.10px;top:412.82px;width:89.30px;text-align:center;font-size:11px;color:#0000cc;font-weight:bold;letter-spacing:0.3px;">36.00%</div>
<div class="t" style="left:1014.40px;top:412.82px;width:89.30px;text-align:center;font-size:11px;color:#0000cc;font-weight:bold;letter-spacing:0.3px;">38.00%</div>
<div class="t" style="left:1109.70px;top:412.82px;width:89.30px;text-align:center;font-size:11px;color:#0000cc;font-weight:bold;letter-spacing:0.3px;">40.00%</div>
<div class="t" style="left:1205.00px;top:412.82px;width:89.30px;text-align:center;font-size:11px;color:#0000cc;font-weight:bold;letter-spacing:0.3px;">42.00%</div>
<div class="t" style="left:1300.30px;top:412.82px;width:89.30px;text-align:center;font-size:11px;color:#0000cc;font-weight:bold;letter-spacing:0.3px;">44.00%</div>
<div class="t" style="left:1395.60px;top:412.82px;width:89.30px;text-align:center;font-size:11px;color:#0000cc;font-weight:bold;letter-spacing:0.3px;">46.00%</div>
<div class="t" style="left:1490.90px;top:412.82px;width:89.30px;text-align:center;font-size:11px;color:#0000cc;font-weight:bold;letter-spacing:0.3px;">48.00%</div>
<div style="position:absolute;left:629.5px;top:424.72px;width:953.0px;height:16.54000000000002px;background:#ffff9c;"></div>
<div class="t" style="left:633.20px;top:429.36px;width:89.30px;text-align:center;font-size:11px;color:#0000cc;font-weight:bold;letter-spacing:0.3px;">35.00%</div>
<div class="t" style="left:728.50px;top:429.36px;width:89.30px;text-align:center;font-size:11px;color:#0000cc;font-weight:bold;letter-spacing:0.3px;">10.00%</div>
<div class="t" style="left:823.80px;top:429.36px;width:89.30px;text-align:center;font-size:11px;color:#0000cc;font-weight:bold;letter-spacing:0.3px;">41.00%</div>
<div class="t" style="left:919.10px;top:429.36px;width:89.30px;text-align:center;font-size:11px;color:#0000cc;font-weight:bold;letter-spacing:0.3px;">44.00%</div>
<div class="t" style="left:1014.40px;top:429.36px;width:89.30px;text-align:center;font-size:11px;color:#0000cc;font-weight:bold;letter-spacing:0.3px;">47.00%</div>
<div class="t" style="left:1109.70px;top:429.36px;width:89.30px;text-align:center;font-size:11px;color:#0000cc;font-weight:bold;letter-spacing:0.3px;">50.00%</div>
<div class="t" style="left:1205.00px;top:429.36px;width:89.30px;text-align:center;font-size:11px;color:#0000cc;font-weight:bold;letter-spacing:0.3px;">53.00%</div>
<div class="t" style="left:1300.30px;top:429.36px;width:89.30px;text-align:center;font-size:11px;color:#0000cc;font-weight:bold;letter-spacing:0.3px;">56.00%</div>
<div class="t" style="left:1395.60px;top:429.36px;width:89.30px;text-align:center;font-size:11px;color:#0000cc;font-weight:bold;letter-spacing:0.3px;">59.00%</div>
<div class="t" style="left:1490.90px;top:429.36px;width:89.30px;text-align:center;font-size:11px;color:#0000cc;font-weight:bold;letter-spacing:0.3px;">62.00%</div>
<div style="position:absolute;left:629.5px;top:441.26px;width:953.0px;height:16.54000000000002px;background:#ffff9c;"></div>
<div class="t" style="left:633.20px;top:445.90px;width:89.30px;text-align:center;font-size:11px;color:#0000cc;font-weight:bold;letter-spacing:0.3px;">40.00%</div>
<div class="t" style="left:728.50px;top:445.90px;width:89.30px;text-align:center;font-size:11px;color:#0000cc;font-weight:bold;letter-spacing:0.3px;">10.00%</div>
<div class="t" style="left:823.80px;top:445.90px;width:89.30px;text-align:center;font-size:11px;color:#0000cc;font-weight:bold;letter-spacing:0.3px;">48.00%</div>
<div class="t" style="left:919.10px;top:445.90px;width:89.30px;text-align:center;font-size:11px;color:#0000cc;font-weight:bold;letter-spacing:0.3px;">52.00%</div>
<div class="t" style="left:1014.40px;top:445.90px;width:89.30px;text-align:center;font-size:11px;color:#0000cc;font-weight:bold;letter-spacing:0.3px;">56.00%</div>
<div class="t" style="left:1109.70px;top:445.90px;width:89.30px;text-align:center;font-size:11px;color:#0000cc;font-weight:bold;letter-spacing:0.3px;">60.00%</div>
<div class="t" style="left:1205.00px;top:445.90px;width:89.30px;text-align:center;font-size:11px;color:#0000cc;font-weight:bold;letter-spacing:0.3px;">64.00%</div>
<div class="t" style="left:1300.30px;top:445.90px;width:89.30px;text-align:center;font-size:11px;color:#0000cc;font-weight:bold;letter-spacing:0.3px;">68.00%</div>
<div class="t" style="left:1395.60px;top:445.90px;width:89.30px;text-align:center;font-size:11px;color:#0000cc;font-weight:bold;letter-spacing:0.3px;">72.00%</div>
<div class="t" style="left:1490.90px;top:445.90px;width:89.30px;text-align:center;font-size:11px;color:#0000cc;font-weight:bold;letter-spacing:0.3px;">76.00%</div>
<div style="position:absolute;left:629.5px;top:341.5px;width:953.0px;height:1px;background:repeating-linear-gradient(90deg,#474747 0 2px,transparent 2px 3px);"></div>
<div style="position:absolute;left:629.5px;top:358.5px;width:953.0px;height:1px;background:repeating-linear-gradient(90deg,#474747 0 2px,transparent 2px 3px);"></div>
<div style="position:absolute;left:629.5px;top:374.5px;width:953.0px;height:1px;background:repeating-linear-gradient(90deg,#474747 0 2px,transparent 2px 3px);"></div>
<div style="position:absolute;left:629.5px;top:391.5px;width:953.0px;height:1px;background:repeating-linear-gradient(90deg,#474747 0 2px,transparent 2px 3px);"></div>
<div style="position:absolute;left:629.5px;top:407.5px;width:953.0px;height:1px;background:repeating-linear-gradient(90deg,#474747 0 2px,transparent 2px 3px);"></div>
<div style="position:absolute;left:629.5px;top:424.5px;width:953.0px;height:1px;background:repeating-linear-gradient(90deg,#474747 0 2px,transparent 2px 3px);"></div>
<div style="position:absolute;left:629.5px;top:440.5px;width:953.0px;height:1px;background:repeating-linear-gradient(90deg,#474747 0 2px,transparent 2px 3px);"></div>
<div style="position:absolute;left:629.5px;top:457.5px;width:953.0px;height:1px;background:repeating-linear-gradient(90deg,#474747 0 2px,transparent 2px 3px);"></div>
<div style="position:absolute;left:629px;top:342.02px;width:1px;height:115.78000000000003px;background:repeating-linear-gradient(180deg,#474747 0 2px,transparent 2px 3px);"></div>
<div style="position:absolute;left:724px;top:342.02px;width:1px;height:115.78000000000003px;background:repeating-linear-gradient(180deg,#474747 0 2px,transparent 2px 3px);"></div>
<div style="position:absolute;left:820px;top:342.02px;width:1px;height:115.78000000000003px;background:repeating-linear-gradient(180deg,#474747 0 2px,transparent 2px 3px);"></div>
<div style="position:absolute;left:915px;top:342.02px;width:1px;height:115.78000000000003px;background:repeating-linear-gradient(180deg,#474747 0 2px,transparent 2px 3px);"></div>
<div style="position:absolute;left:1010px;top:342.02px;width:1px;height:115.78000000000003px;background:repeating-linear-gradient(180deg,#474747 0 2px,transparent 2px 3px);"></div>
<div style="position:absolute;left:1106px;top:342.02px;width:1px;height:115.78000000000003px;background:repeating-linear-gradient(180deg,#474747 0 2px,transparent 2px 3px);"></div>
<div style="position:absolute;left:1201px;top:342.02px;width:1px;height:115.78000000000003px;background:repeating-linear-gradient(180deg,#474747 0 2px,transparent 2px 3px);"></div>
<div style="position:absolute;left:1296px;top:342.02px;width:1px;height:115.78000000000003px;background:repeating-linear-gradient(180deg,#474747 0 2px,transparent 2px 3px);"></div>
<div style="position:absolute;left:1391px;top:342.02px;width:1px;height:115.78000000000003px;background:repeating-linear-gradient(180deg,#474747 0 2px,transparent 2px 3px);"></div>
<div style="position:absolute;left:1487px;top:342.02px;width:1px;height:115.78000000000003px;background:repeating-linear-gradient(180deg,#474747 0 2px,transparent 2px 3px);"></div>
<div style="position:absolute;left:1582px;top:342.02px;width:1px;height:115.78000000000003px;background:repeating-linear-gradient(180deg,#474747 0 2px,transparent 2px 3px);"></div>
<div style="position:absolute;left:363.5px;top:324.5px;width:266.0px;height:1px;background:repeating-linear-gradient(90deg,#474747 0 2px,transparent 2px 3px);"></div>
<div style="position:absolute;left:363.5px;top:341.5px;width:266.0px;height:1px;background:repeating-linear-gradient(90deg,#474747 0 2px,transparent 2px 3px);"></div>
<div style="position:absolute;left:363.5px;top:325px;width:1px;height:16.54000000000002px;background:repeating-linear-gradient(180deg,#474747 0 2px,transparent 2px 3px);"></div>
<div class="t" style="left:112.00px;top:462.44px;width:248.50px;text-align:left;font-size:11px;color:#000;font-weight:bold;letter-spacing:-0.22px;">Total CAPEX</div>
<div class="t" style="left:367.20px;top:462.44px;width:165.00px;text-align:center;font-size:11px;color:#000;font-weight:bold;letter-spacing:0.6px;">$5,350,000</div>
<div class="t" style="left:538.20px;top:462.44px;width:89.00px;text-align:center;font-size:11px;color:#000;font-weight:bold;letter-spacing:0.6px;">$5,350,000</div>
<div style="position:absolute;left:109px;top:457px;width:520.5px;height:1.2px;background:#000;"></div>
<div style="position:absolute;left:109px;top:473px;width:520.5px;height:1.2px;background:#000;"></div>
<div style="position:absolute;left:109.00px;top:490.88px;width:254.50px;height:16.54px;background:#000;"></div>
<div class="t" style="left:112.00px;top:495.52px;width:248.50px;text-align:left;font-size:11px;color:#fff;font-weight:normal;letter-spacing:0.45px;">Other Items</div>
<div class="t" style="left:367.20px;top:495.52px;width:165.00px;text-align:center;font-size:11px;color:#000;font-weight:bold;letter-spacing:-0.22px;">Scenario</div>
<div class="t" style="left:538.20px;top:495.52px;width:89.00px;text-align:center;font-size:11px;color:#000;font-weight:bold;letter-spacing:-0.22px;">Base</div>
<div style="position:absolute;left:109px;top:506px;width:520.5px;height:1.5px;background:#000;"></div>
<div class="t" style="left:112.00px;top:512.06px;width:248.50px;text-align:left;font-size:11px;color:#000;font-weight:normal;letter-spacing:0.1px;-webkit-text-stroke:0.3px #000;">New Refinancing / Restructure Loan Amount</div>
<div class="t" style="left:367.20px;top:512.06px;width:165.00px;text-align:center;font-size:11px;color:#000;font-weight:normal;letter-spacing:0.55px;-webkit-text-stroke:0.3px #000;">$20,000,000</div>
<div class="t" style="left:538.20px;top:512.06px;width:89.00px;text-align:center;font-size:11px;color:#000;font-weight:normal;letter-spacing:0.55px;-webkit-text-stroke:0.3px #000;">$20,000,000</div>
<div style="position:absolute;left:629.5px;top:507.42px;width:953.0px;height:16.54000000000002px;background:#ffff9c;"></div>
<div class="t" style="left:633.20px;top:512.06px;width:89.30px;text-align:center;font-size:11px;color:#0000cc;font-weight:bold;letter-spacing:0.3px;">10.00%</div>
<div class="t" style="left:728.50px;top:512.06px;width:89.30px;text-align:center;font-size:11px;color:#0000cc;font-weight:bold;letter-spacing:0.3px;">10.00%</div>
<div class="t" style="left:823.80px;top:512.06px;width:89.30px;text-align:center;font-size:11px;color:#0000cc;font-weight:bold;letter-spacing:0.3px;">6.00%</div>
<div class="t" style="left:919.10px;top:512.06px;width:89.30px;text-align:center;font-size:11px;color:#0000cc;font-weight:bold;letter-spacing:0.3px;">4.00%</div>
<div class="t" style="left:1014.40px;top:512.06px;width:89.30px;text-align:center;font-size:11px;color:#0000cc;font-weight:bold;letter-spacing:0.3px;">2.00%</div>
<div class="t" style="left:1109.70px;top:512.06px;width:89.30px;text-align:center;font-size:11px;color:#0000cc;font-weight:bold;letter-spacing:0.3px;">0.00%</div>
<div class="t" style="left:1205.00px;top:512.06px;width:89.30px;text-align:center;font-size:11px;color:#0000cc;font-weight:bold;letter-spacing:0.3px;">-2.00%</div>
<div class="t" style="left:1300.30px;top:512.06px;width:89.30px;text-align:center;font-size:11px;color:#0000cc;font-weight:bold;letter-spacing:0.3px;">-4.00%</div>
<div class="t" style="left:1395.60px;top:512.06px;width:89.30px;text-align:center;font-size:11px;color:#0000cc;font-weight:bold;letter-spacing:0.3px;">-6.00%</div>
<div class="t" style="left:1490.90px;top:512.06px;width:89.30px;text-align:center;font-size:11px;color:#0000cc;font-weight:bold;letter-spacing:0.3px;">-8.00%</div>
<div style="position:absolute;left:629.5px;top:506.5px;width:953.0px;height:1px;background:repeating-linear-gradient(90deg,#474747 0 2px,transparent 2px 3px);"></div>
<div style="position:absolute;left:629.5px;top:523.5px;width:953.0px;height:1px;background:repeating-linear-gradient(90deg,#474747 0 2px,transparent 2px 3px);"></div>
<div style="position:absolute;left:629px;top:507.42px;width:1px;height:16.54000000000002px;background:repeating-linear-gradient(180deg,#474747 0 2px,transparent 2px 3px);"></div>
<div style="position:absolute;left:724px;top:507.42px;width:1px;height:16.54000000000002px;background:repeating-linear-gradient(180deg,#474747 0 2px,transparent 2px 3px);"></div>
<div style="position:absolute;left:820px;top:507.42px;width:1px;height:16.54000000000002px;background:repeating-linear-gradient(180deg,#474747 0 2px,transparent 2px 3px);"></div>
<div style="position:absolute;left:915px;top:507.42px;width:1px;height:16.54000000000002px;background:repeating-linear-gradient(180deg,#474747 0 2px,transparent 2px 3px);"></div>
<div style="position:absolute;left:1010px;top:507.42px;width:1px;height:16.54000000000002px;background:repeating-linear-gradient(180deg,#474747 0 2px,transparent 2px 3px);"></div>
<div style="position:absolute;left:1106px;top:507.42px;width:1px;height:16.54000000000002px;background:repeating-linear-gradient(180deg,#474747 0 2px,transparent 2px 3px);"></div>
<div style="position:absolute;left:1201px;top:507.42px;width:1px;height:16.54000000000002px;background:repeating-linear-gradient(180deg,#474747 0 2px,transparent 2px 3px);"></div>
<div style="position:absolute;left:1296px;top:507.42px;width:1px;height:16.54000000000002px;background:repeating-linear-gradient(180deg,#474747 0 2px,transparent 2px 3px);"></div>
<div style="position:absolute;left:1391px;top:507.42px;width:1px;height:16.54000000000002px;background:repeating-linear-gradient(180deg,#474747 0 2px,transparent 2px 3px);"></div>
<div style="position:absolute;left:1487px;top:507.42px;width:1px;height:16.54000000000002px;background:repeating-linear-gradient(180deg,#474747 0 2px,transparent 2px 3px);"></div>
<div style="position:absolute;left:1582px;top:507.42px;width:1px;height:16.54000000000002px;background:repeating-linear-gradient(180deg,#474747 0 2px,transparent 2px 3px);"></div>
<div class="t" style="left:112.00px;top:545.14px;width:248.50px;text-align:left;font-size:11px;color:#000;font-weight:normal;letter-spacing:0.1px;-webkit-text-stroke:0.3px #000;">New Refinancing / Restructure Loan Interest Rate</div>
<div class="t" style="left:367.20px;top:545.14px;width:165.00px;text-align:center;font-size:11px;color:#000;font-weight:normal;letter-spacing:0.3px;-webkit-text-stroke:0.3px #000;">6.00%</div>
<div class="t" style="left:538.20px;top:545.14px;width:89.00px;text-align:center;font-size:11px;color:#000;font-weight:normal;letter-spacing:0.3px;-webkit-text-stroke:0.3px #000;">6.00%</div>
<div style="position:absolute;left:629.5px;top:540.5px;width:953.0px;height:16.539999999999964px;background:#ffff9c;"></div>
<div class="t" style="left:633.20px;top:545.14px;width:89.30px;text-align:center;font-size:11px;color:#0000cc;font-weight:bold;letter-spacing:0.3px;">10.00%</div>
<div class="t" style="left:728.50px;top:545.14px;width:89.30px;text-align:center;font-size:11px;color:#0000cc;font-weight:bold;letter-spacing:0.3px;">10.00%</div>
<div class="t" style="left:823.80px;top:545.14px;width:89.30px;text-align:center;font-size:11px;color:#0000cc;font-weight:bold;letter-spacing:0.3px;">6.00%</div>
<div class="t" style="left:919.10px;top:545.14px;width:89.30px;text-align:center;font-size:11px;color:#0000cc;font-weight:bold;letter-spacing:0.3px;">4.00%</div>
<div class="t" style="left:1014.40px;top:545.14px;width:89.30px;text-align:center;font-size:11px;color:#0000cc;font-weight:bold;letter-spacing:0.3px;">2.00%</div>
<div class="t" style="left:1109.70px;top:545.14px;width:89.30px;text-align:center;font-size:11px;color:#0000cc;font-weight:bold;letter-spacing:0.3px;">0.00%</div>
<div class="t" style="left:1205.00px;top:545.14px;width:89.30px;text-align:center;font-size:11px;color:#0000cc;font-weight:bold;letter-spacing:0.3px;">-2.00%</div>
<div class="t" style="left:1300.30px;top:545.14px;width:89.30px;text-align:center;font-size:11px;color:#0000cc;font-weight:bold;letter-spacing:0.3px;">-4.00%</div>
<div class="t" style="left:1395.60px;top:545.14px;width:89.30px;text-align:center;font-size:11px;color:#0000cc;font-weight:bold;letter-spacing:0.3px;">-6.00%</div>
<div class="t" style="left:1490.90px;top:545.14px;width:89.30px;text-align:center;font-size:11px;color:#0000cc;font-weight:bold;letter-spacing:0.3px;">-8.00%</div>
<div style="position:absolute;left:629.5px;top:539.5px;width:953.0px;height:1px;background:repeating-linear-gradient(90deg,#474747 0 2px,transparent 2px 3px);"></div>
<div style="position:absolute;left:629.5px;top:556.5px;width:953.0px;height:1px;background:repeating-linear-gradient(90deg,#474747 0 2px,transparent 2px 3px);"></div>
<div style="position:absolute;left:629px;top:540.5px;width:1px;height:16.539999999999964px;background:repeating-linear-gradient(180deg,#474747 0 2px,transparent 2px 3px);"></div>
<div style="position:absolute;left:724px;top:540.5px;width:1px;height:16.539999999999964px;background:repeating-linear-gradient(180deg,#474747 0 2px,transparent 2px 3px);"></div>
<div style="position:absolute;left:820px;top:540.5px;width:1px;height:16.539999999999964px;background:repeating-linear-gradient(180deg,#474747 0 2px,transparent 2px 3px);"></div>
<div style="position:absolute;left:915px;top:540.5px;width:1px;height:16.539999999999964px;background:repeating-linear-gradient(180deg,#474747 0 2px,transparent 2px 3px);"></div>
<div style="position:absolute;left:1010px;top:540.5px;width:1px;height:16.539999999999964px;background:repeating-linear-gradient(180deg,#474747 0 2px,transparent 2px 3px);"></div>
<div style="position:absolute;left:1106px;top:540.5px;width:1px;height:16.539999999999964px;background:repeating-linear-gradient(180deg,#474747 0 2px,transparent 2px 3px);"></div>
<div style="position:absolute;left:1201px;top:540.5px;width:1px;height:16.539999999999964px;background:repeating-linear-gradient(180deg,#474747 0 2px,transparent 2px 3px);"></div>
<div style="position:absolute;left:1296px;top:540.5px;width:1px;height:16.539999999999964px;background:repeating-linear-gradient(180deg,#474747 0 2px,transparent 2px 3px);"></div>
<div style="position:absolute;left:1391px;top:540.5px;width:1px;height:16.539999999999964px;background:repeating-linear-gradient(180deg,#474747 0 2px,transparent 2px 3px);"></div>
<div style="position:absolute;left:1487px;top:540.5px;width:1px;height:16.539999999999964px;background:repeating-linear-gradient(180deg,#474747 0 2px,transparent 2px 3px);"></div>
<div style="position:absolute;left:1582px;top:540.5px;width:1px;height:16.539999999999964px;background:repeating-linear-gradient(180deg,#474747 0 2px,transparent 2px 3px);"></div>
<div class="t" style="left:112.00px;top:578.22px;width:248.50px;text-align:left;font-size:11px;color:#000;font-weight:normal;letter-spacing:0.1px;-webkit-text-stroke:0.3px #000;">Working Capital Loan Interest Amount</div>
<div class="t" style="left:367.20px;top:578.22px;width:165.00px;text-align:center;font-size:11px;color:#000;font-weight:normal;letter-spacing:0.3px;-webkit-text-stroke:0.3px #000;">8.00%</div>
<div class="t" style="left:538.20px;top:578.22px;width:89.00px;text-align:center;font-size:11px;color:#000;font-weight:normal;letter-spacing:0.3px;-webkit-text-stroke:0.3px #000;">8.00%</div>
<div style="position:absolute;left:629.5px;top:573.5799999999999px;width:953.0px;height:16.539999999999964px;background:#ffff9c;"></div>
<div class="t" style="left:633.20px;top:578.22px;width:89.30px;text-align:center;font-size:11px;color:#0000cc;font-weight:bold;letter-spacing:0.3px;">10.00%</div>
<div class="t" style="left:728.50px;top:578.22px;width:89.30px;text-align:center;font-size:11px;color:#0000cc;font-weight:bold;letter-spacing:0.3px;">10.00%</div>
<div class="t" style="left:823.80px;top:578.22px;width:89.30px;text-align:center;font-size:11px;color:#0000cc;font-weight:bold;letter-spacing:0.3px;">6.00%</div>
<div class="t" style="left:919.10px;top:578.22px;width:89.30px;text-align:center;font-size:11px;color:#0000cc;font-weight:bold;letter-spacing:0.3px;">4.00%</div>
<div class="t" style="left:1014.40px;top:578.22px;width:89.30px;text-align:center;font-size:11px;color:#0000cc;font-weight:bold;letter-spacing:0.3px;">2.00%</div>
<div class="t" style="left:1109.70px;top:578.22px;width:89.30px;text-align:center;font-size:11px;color:#0000cc;font-weight:bold;letter-spacing:0.3px;">0.00%</div>
<div class="t" style="left:1205.00px;top:578.22px;width:89.30px;text-align:center;font-size:11px;color:#0000cc;font-weight:bold;letter-spacing:0.3px;">-2.00%</div>
<div class="t" style="left:1300.30px;top:578.22px;width:89.30px;text-align:center;font-size:11px;color:#0000cc;font-weight:bold;letter-spacing:0.3px;">-4.00%</div>
<div class="t" style="left:1395.60px;top:578.22px;width:89.30px;text-align:center;font-size:11px;color:#0000cc;font-weight:bold;letter-spacing:0.3px;">-6.00%</div>
<div class="t" style="left:1490.90px;top:578.22px;width:89.30px;text-align:center;font-size:11px;color:#0000cc;font-weight:bold;letter-spacing:0.3px;">-8.00%</div>
<div style="position:absolute;left:629.5px;top:573.5px;width:953.0px;height:1px;background:repeating-linear-gradient(90deg,#474747 0 2px,transparent 2px 3px);"></div>
<div style="position:absolute;left:629.5px;top:589.5px;width:953.0px;height:1px;background:repeating-linear-gradient(90deg,#474747 0 2px,transparent 2px 3px);"></div>
<div style="position:absolute;left:629px;top:573.5799999999999px;width:1px;height:16.539999999999964px;background:repeating-linear-gradient(180deg,#474747 0 2px,transparent 2px 3px);"></div>
<div style="position:absolute;left:724px;top:573.5799999999999px;width:1px;height:16.539999999999964px;background:repeating-linear-gradient(180deg,#474747 0 2px,transparent 2px 3px);"></div>
<div style="position:absolute;left:820px;top:573.5799999999999px;width:1px;height:16.539999999999964px;background:repeating-linear-gradient(180deg,#474747 0 2px,transparent 2px 3px);"></div>
<div style="position:absolute;left:915px;top:573.5799999999999px;width:1px;height:16.539999999999964px;background:repeating-linear-gradient(180deg,#474747 0 2px,transparent 2px 3px);"></div>
<div style="position:absolute;left:1010px;top:573.5799999999999px;width:1px;height:16.539999999999964px;background:repeating-linear-gradient(180deg,#474747 0 2px,transparent 2px 3px);"></div>
<div style="position:absolute;left:1106px;top:573.5799999999999px;width:1px;height:16.539999999999964px;background:repeating-linear-gradient(180deg,#474747 0 2px,transparent 2px 3px);"></div>
<div style="position:absolute;left:1201px;top:573.5799999999999px;width:1px;height:16.539999999999964px;background:repeating-linear-gradient(180deg,#474747 0 2px,transparent 2px 3px);"></div>
<div style="position:absolute;left:1296px;top:573.5799999999999px;width:1px;height:16.539999999999964px;background:repeating-linear-gradient(180deg,#474747 0 2px,transparent 2px 3px);"></div>
<div style="position:absolute;left:1391px;top:573.5799999999999px;width:1px;height:16.539999999999964px;background:repeating-linear-gradient(180deg,#474747 0 2px,transparent 2px 3px);"></div>
<div style="position:absolute;left:1487px;top:573.5799999999999px;width:1px;height:16.539999999999964px;background:repeating-linear-gradient(180deg,#474747 0 2px,transparent 2px 3px);"></div>
<div style="position:absolute;left:1582px;top:573.5799999999999px;width:1px;height:16.539999999999964px;background:repeating-linear-gradient(180deg,#474747 0 2px,transparent 2px 3px);"></div>
<div class="t" style="left:112.00px;top:611.30px;width:248.50px;text-align:left;font-size:11px;color:#000;font-weight:normal;letter-spacing:0.1px;-webkit-text-stroke:0.3px #000;">Exit Multiple (owner sale)</div>
<div class="t" style="left:367.20px;top:611.30px;width:165.00px;text-align:center;font-size:11px;color:#000;font-weight:normal;letter-spacing:0.3px;-webkit-text-stroke:0.3px #000;">5.00x</div>
<div class="t" style="left:538.20px;top:611.30px;width:89.00px;text-align:center;font-size:11px;color:#000;font-weight:normal;letter-spacing:0.3px;-webkit-text-stroke:0.3px #000;">5.00x</div>
<div style="position:absolute;left:629.5px;top:606.66px;width:953.0px;height:16.539999999999964px;background:#ffff9c;"></div>
<div class="t" style="left:633.20px;top:611.30px;width:89.30px;text-align:center;font-size:11px;color:#0000cc;font-weight:bold;letter-spacing:0.3px;">10.00%</div>
<div class="t" style="left:728.50px;top:611.30px;width:89.30px;text-align:center;font-size:11px;color:#0000cc;font-weight:bold;letter-spacing:0.3px;">10.00%</div>
<div class="t" style="left:823.80px;top:611.30px;width:89.30px;text-align:center;font-size:11px;color:#0000cc;font-weight:bold;letter-spacing:0.3px;">6.00%</div>
<div class="t" style="left:919.10px;top:611.30px;width:89.30px;text-align:center;font-size:11px;color:#0000cc;font-weight:bold;letter-spacing:0.3px;">4.00%</div>
<div class="t" style="left:1014.40px;top:611.30px;width:89.30px;text-align:center;font-size:11px;color:#0000cc;font-weight:bold;letter-spacing:0.3px;">2.00%</div>
<div class="t" style="left:1109.70px;top:611.30px;width:89.30px;text-align:center;font-size:11px;color:#0000cc;font-weight:bold;letter-spacing:0.3px;">0.00%</div>
<div class="t" style="left:1205.00px;top:611.30px;width:89.30px;text-align:center;font-size:11px;color:#0000cc;font-weight:bold;letter-spacing:0.3px;">-2.00%</div>
<div class="t" style="left:1300.30px;top:611.30px;width:89.30px;text-align:center;font-size:11px;color:#0000cc;font-weight:bold;letter-spacing:0.3px;">-4.00%</div>
<div class="t" style="left:1395.60px;top:611.30px;width:89.30px;text-align:center;font-size:11px;color:#0000cc;font-weight:bold;letter-spacing:0.3px;">-6.00%</div>
<div class="t" style="left:1490.90px;top:611.30px;width:89.30px;text-align:center;font-size:11px;color:#0000cc;font-weight:bold;letter-spacing:0.3px;">-8.00%</div>
<div style="position:absolute;left:629.5px;top:606.5px;width:953.0px;height:1px;background:repeating-linear-gradient(90deg,#474747 0 2px,transparent 2px 3px);"></div>
<div style="position:absolute;left:629.5px;top:622.5px;width:953.0px;height:1px;background:repeating-linear-gradient(90deg,#474747 0 2px,transparent 2px 3px);"></div>
<div style="position:absolute;left:629px;top:606.66px;width:1px;height:16.539999999999964px;background:repeating-linear-gradient(180deg,#474747 0 2px,transparent 2px 3px);"></div>
<div style="position:absolute;left:724px;top:606.66px;width:1px;height:16.539999999999964px;background:repeating-linear-gradient(180deg,#474747 0 2px,transparent 2px 3px);"></div>
<div style="position:absolute;left:820px;top:606.66px;width:1px;height:16.539999999999964px;background:repeating-linear-gradient(180deg,#474747 0 2px,transparent 2px 3px);"></div>
<div style="position:absolute;left:915px;top:606.66px;width:1px;height:16.539999999999964px;background:repeating-linear-gradient(180deg,#474747 0 2px,transparent 2px 3px);"></div>
<div style="position:absolute;left:1010px;top:606.66px;width:1px;height:16.539999999999964px;background:repeating-linear-gradient(180deg,#474747 0 2px,transparent 2px 3px);"></div>
<div style="position:absolute;left:1106px;top:606.66px;width:1px;height:16.539999999999964px;background:repeating-linear-gradient(180deg,#474747 0 2px,transparent 2px 3px);"></div>
<div style="position:absolute;left:1201px;top:606.66px;width:1px;height:16.539999999999964px;background:repeating-linear-gradient(180deg,#474747 0 2px,transparent 2px 3px);"></div>
<div style="position:absolute;left:1296px;top:606.66px;width:1px;height:16.539999999999964px;background:repeating-linear-gradient(180deg,#474747 0 2px,transparent 2px 3px);"></div>
<div style="position:absolute;left:1391px;top:606.66px;width:1px;height:16.539999999999964px;background:repeating-linear-gradient(180deg,#474747 0 2px,transparent 2px 3px);"></div>
<div style="position:absolute;left:1487px;top:606.66px;width:1px;height:16.539999999999964px;background:repeating-linear-gradient(180deg,#474747 0 2px,transparent 2px 3px);"></div>
<div style="position:absolute;left:1582px;top:606.66px;width:1px;height:16.539999999999964px;background:repeating-linear-gradient(180deg,#474747 0 2px,transparent 2px 3px);"></div>
<div class="t" style="left:112.00px;top:644.38px;width:248.50px;text-align:left;font-size:11px;color:#000;font-weight:normal;letter-spacing:0.1px;-webkit-text-stroke:0.3px #000;">Exit Multiple (buyout and sale)</div>
<div class="t" style="left:367.20px;top:644.38px;width:165.00px;text-align:center;font-size:11px;color:#000;font-weight:normal;letter-spacing:0.3px;-webkit-text-stroke:0.3px #000;">5.00x</div>
<div class="t" style="left:538.20px;top:644.38px;width:89.00px;text-align:center;font-size:11px;color:#000;font-weight:normal;letter-spacing:0.3px;-webkit-text-stroke:0.3px #000;">5.00x</div>
<div style="position:absolute;left:629.5px;top:639.74px;width:953.0px;height:16.539999999999964px;background:#ffff9c;"></div>
<div class="t" style="left:633.20px;top:644.38px;width:89.30px;text-align:center;font-size:11px;color:#0000cc;font-weight:bold;letter-spacing:0.3px;">10.00%</div>
<div class="t" style="left:728.50px;top:644.38px;width:89.30px;text-align:center;font-size:11px;color:#0000cc;font-weight:bold;letter-spacing:0.3px;">10.00%</div>
<div class="t" style="left:823.80px;top:644.38px;width:89.30px;text-align:center;font-size:11px;color:#0000cc;font-weight:bold;letter-spacing:0.3px;">6.00%</div>
<div class="t" style="left:919.10px;top:644.38px;width:89.30px;text-align:center;font-size:11px;color:#0000cc;font-weight:bold;letter-spacing:0.3px;">4.00%</div>
<div class="t" style="left:1014.40px;top:644.38px;width:89.30px;text-align:center;font-size:11px;color:#0000cc;font-weight:bold;letter-spacing:0.3px;">2.00%</div>
<div class="t" style="left:1109.70px;top:644.38px;width:89.30px;text-align:center;font-size:11px;color:#0000cc;font-weight:bold;letter-spacing:0.3px;">0.00%</div>
<div class="t" style="left:1205.00px;top:644.38px;width:89.30px;text-align:center;font-size:11px;color:#0000cc;font-weight:bold;letter-spacing:0.3px;">-2.00%</div>
<div class="t" style="left:1300.30px;top:644.38px;width:89.30px;text-align:center;font-size:11px;color:#0000cc;font-weight:bold;letter-spacing:0.3px;">-4.00%</div>
<div class="t" style="left:1395.60px;top:644.38px;width:89.30px;text-align:center;font-size:11px;color:#0000cc;font-weight:bold;letter-spacing:0.3px;">-6.00%</div>
<div class="t" style="left:1490.90px;top:644.38px;width:89.30px;text-align:center;font-size:11px;color:#0000cc;font-weight:bold;letter-spacing:0.3px;">-8.00%</div>
<div style="position:absolute;left:629.5px;top:639.5px;width:953.0px;height:1px;background:repeating-linear-gradient(90deg,#474747 0 2px,transparent 2px 3px);"></div>
<div style="position:absolute;left:629.5px;top:655.5px;width:953.0px;height:1px;background:repeating-linear-gradient(90deg,#474747 0 2px,transparent 2px 3px);"></div>
<div style="position:absolute;left:629px;top:639.74px;width:1px;height:16.539999999999964px;background:repeating-linear-gradient(180deg,#474747 0 2px,transparent 2px 3px);"></div>
<div style="position:absolute;left:724px;top:639.74px;width:1px;height:16.539999999999964px;background:repeating-linear-gradient(180deg,#474747 0 2px,transparent 2px 3px);"></div>
<div style="position:absolute;left:820px;top:639.74px;width:1px;height:16.539999999999964px;background:repeating-linear-gradient(180deg,#474747 0 2px,transparent 2px 3px);"></div>
<div style="position:absolute;left:915px;top:639.74px;width:1px;height:16.539999999999964px;background:repeating-linear-gradient(180deg,#474747 0 2px,transparent 2px 3px);"></div>
<div style="position:absolute;left:1010px;top:639.74px;width:1px;height:16.539999999999964px;background:repeating-linear-gradient(180deg,#474747 0 2px,transparent 2px 3px);"></div>
<div style="position:absolute;left:1106px;top:639.74px;width:1px;height:16.539999999999964px;background:repeating-linear-gradient(180deg,#474747 0 2px,transparent 2px 3px);"></div>
<div style="position:absolute;left:1201px;top:639.74px;width:1px;height:16.539999999999964px;background:repeating-linear-gradient(180deg,#474747 0 2px,transparent 2px 3px);"></div>
<div style="position:absolute;left:1296px;top:639.74px;width:1px;height:16.539999999999964px;background:repeating-linear-gradient(180deg,#474747 0 2px,transparent 2px 3px);"></div>
<div style="position:absolute;left:1391px;top:639.74px;width:1px;height:16.539999999999964px;background:repeating-linear-gradient(180deg,#474747 0 2px,transparent 2px 3px);"></div>
<div style="position:absolute;left:1487px;top:639.74px;width:1px;height:16.539999999999964px;background:repeating-linear-gradient(180deg,#474747 0 2px,transparent 2px 3px);"></div>
<div style="position:absolute;left:1582px;top:639.74px;width:1px;height:16.539999999999964px;background:repeating-linear-gradient(180deg,#474747 0 2px,transparent 2px 3px);"></div>
<svg style="left:15px;top:15px" width="15" height="15"><rect x="2" y="0" width="13" height="15" rx="2" fill="#1f9c4a"/><rect x="2" y="7" width="13" height="8" rx="1.5" fill="#0f5e2c"/><rect x="0" y="3.5" width="8.5" height="8.5" rx="1.2" fill="#0d3d1c"/><text x="4.25" y="10.2" font-size="6.5" font-weight="bold" fill="#fff" text-anchor="middle" font-family="Liberation Sans">x</text></svg>
<div class="t" style="left:46px;top:17px;font-size:11.5px;color:#777;font-weight:normal;transform:scaleX(0.8172);transform-origin:left;">AutoSave</div>
<div style="position:absolute;left:93px;top:13px;width:41px;height:18px;border:1px solid #8a8a8a;border-radius:9px;background:#f0f0f0;"></div>
<div style="position:absolute;left:97px;top:16px;width:12px;height:12px;background:#7b7b7b;border-radius:50%;"></div>
<div class="t" style="left:115px;top:17px;font-size:11.5px;color:#777;font-weight:normal;">Off</div>
<svg style="left:146px;top:15px" width="16" height="16" fill="none" stroke="#8a8a8a" stroke-width="1.2"><rect x="0.6" y="0.6" width="14.8" height="14.8" rx="1"/><rect x="3.5" y="0.6" width="8" height="5"/><rect x="3.5" y="9" width="9" height="6.4"/></svg>
<svg style="left:172px;top:14px" width="30" height="18" fill="none" stroke="#8a8a8a" stroke-width="1.2"><path d="M2 2 V8 H8"/><path d="M2.5 7.5 C5 3 12 2 14.5 7 C16 10.5 13 14 10.5 16"/><path d="M22 9 l2.5 2.5 l2.5 -2.5"/></svg>
<svg style="left:207px;top:14px" width="32" height="18" fill="none" stroke="#8a8a8a" stroke-width="1.2"><path d="M15 2 V8 H9"/><path d="M14.5 7.5 C12 3 5 2 2.5 7 C1 10.5 4 14 6.5 16"/><path d="M24 9 l2.5 2.5 l2.5 -2.5"/></svg>
<svg style="left:247px;top:17px" width="10" height="10" fill="none" stroke="#8a8a8a" stroke-width="1.2"><path d="M1 2 H9"/><path d="M2 5 l3 3 l3 -3"/></svg>
<div class="t" style="left:278px;top:16px;font-size:13px;color:#7a7a7a;font-weight:normal;transform:scaleX(0.8416);transform-origin:left;white-space:pre;">Turnaround Template  •  Saved to this PC</div>
<svg style="left:481px;top:18px" width="11" height="8" fill="none" stroke="#6e6e6e" stroke-width="1.2"><path d="M1 1.5 l4.5 4.5 l4.5 -4.5"/></svg>
<div style="position:absolute;left:795px;top:7px;width:346px;height:31px;border:1px solid #a9a9a9;border-radius:4px;background:#dcdcdc;"></div>
<svg style="left:807px;top:15px" width="16" height="16" fill="none" stroke="#777" stroke-width="1.2"><circle cx="9.5" cy="6" r="4.8"/><path d="M6 9.5 L1.5 14"/></svg>
<div class="t" style="left:833px;top:15px;font-size:13px;color:#6a6a6a;font-weight:normal;transform:scaleX(0.9389);transform-origin:left;">Search</div>
<div style="position:absolute;left:1751px;top:11px;width:23px;height:23px;background:#0b1437;border-radius:50%;"></div>
<div class="t" style="left:1751px;top:18px;width:23px;text-align:center;font-size:9px;color:#3b5fb0;">JV</div>
<div style="position:absolute;left:1803px;top:22px;width:10px;height:1px;background:#9a9a9a;"></div>
<svg style="left:1846px;top:16px" width="13" height="13" fill="none" stroke="#9a9a9a" stroke-width="1"><rect x="0.5" y="3.5" width="8.5" height="8.5" rx="1.5"/><path d="M3 3 V2 a1.5 1.5 0 0 1 1.5 -1.5 H10.5 a1.5 1.5 0 0 1 1.5 1.5 V8.5 a1.5 1.5 0 0 1 -1.5 1.5 H9.5"/></svg>
<svg style="left:1892px;top:17px" width="12" height="12" fill="none" stroke="#8a8a8a" stroke-width="1.1"><path d="M1 1 L11 11 M11 1 L1 11"/></svg>
<div class="t" style="left:19.5px;top:53.5px;font-size:13px;color:#141414;font-weight:normal;transform:scaleX(0.9544);transform-origin:left;-webkit-text-stroke:0.25px #141414;">File</div>
<div class="t" style="left:63.3px;top:53.5px;font-size:13px;color:#141414;font-weight:normal;transform:scaleX(1.0405);transform-origin:left;-webkit-text-stroke:0.25px #141414;">Home</div>
<div class="t" style="left:116.7px;top:53.5px;font-size:13px;color:#141414;font-weight:normal;transform:scaleX(0.9945);transform-origin:left;-webkit-text-stroke:0.25px #141414;">Insert</div>
<div class="t" style="left:167.3px;top:53.5px;font-size:13px;color:#141414;font-weight:normal;transform:scaleX(0.9630);transform-origin:left;-webkit-text-stroke:0.25px #141414;">Page Layout</div>
<div class="t" style="left:256.7px;top:53.5px;font-size:13px;color:#141414;font-weight:normal;transform:scaleX(0.9729);transform-origin:left;-webkit-text-stroke:0.25px #141414;">Formulas</div>
<div class="t" style="left:326px;top:53.5px;font-size:13px;color:#141414;font-weight:normal;transform:scaleX(1.0106);transform-origin:left;-webkit-text-stroke:0.25px #141414;">Data</div>
<div class="t" style="left:372.7px;top:53.5px;font-size:13px;color:#141414;font-weight:normal;transform:scaleX(0.9378);transform-origin:left;-webkit-text-stroke:0.25px #141414;">Review</div>
<div class="t" style="left:431px;top:53.5px;font-size:13px;color:#141414;font-weight:normal;transform:scaleX(1.0147);transform-origin:left;-webkit-text-stroke:0.25px #141414;">View</div>
<div class="t" style="left:476px;top:53.5px;font-size:13px;color:#141414;font-weight:normal;transform:scaleX(1.0384);transform-origin:left;-webkit-text-stroke:0.25px #141414;">Automate</div>
<div class="t" style="left:552.3px;top:53.5px;font-size:13px;color:#141414;font-weight:normal;transform:scaleX(0.9791);transform-origin:left;-webkit-text-stroke:0.25px #141414;">Developer</div>
<div class="t" style="left:628px;top:53.5px;font-size:13px;color:#141414;font-weight:normal;transform:scaleX(1.0507);transform-origin:left;-webkit-text-stroke:0.25px #141414;">Help</div>
<div class="t" style="left:672.7px;top:53.5px;font-size:13px;color:#141414;font-weight:normal;transform:scaleX(1.0214);transform-origin:left;-webkit-text-stroke:0.25px #141414;">Acrobat</div>
<div style="position:absolute;left:63px;top:70px;width:37px;height:3px;background:#0e4a1c;border-radius:1.5px;"></div>
<div style="position:absolute;left:1714px;top:48.5px;width:88px;height:23px;border:1px solid #9a9a9a;border-radius:4px;background:#fff;"></div>
<svg style="left:1719px;top:54px" width="13" height="13" fill="none" stroke="#222" stroke-width="1.1"><path d="M1 1 H11.5 V8 H5 L2 11 V8 H1 Z"/></svg>
<div class="t" style="left:1734px;top:53.5px;font-size:13px;color:#1a1a1a;font-weight:normal;transform:scaleX(0.9982);transform-origin:left;-webkit-text-stroke:0.25px #1a1a1a;">Comments</div>
<div style="position:absolute;left:1809.5px;top:48.5px;width:68px;height:23px;background:#083412;border-radius:4px;border:1px solid #06280c;"></div>
<svg style="left:1814px;top:54px" width="14" height="14" fill="none" stroke="#cfe8c8" stroke-width="1.1"><path d="M1 6 V13 H11 V10"/><path d="M4 10 C4 6 7 4.5 10.5 4.5 V2 L13.5 5.5 L10.5 9 V6.8 C8 6.8 6 8 4 10 Z"/></svg>
<div class="t" style="left:1830px;top:53.5px;font-size:13px;color:#e6f3e2;font-weight:normal;transform:scaleX(0.9598);transform-origin:left;">Share</div>
<svg style="left:1868px;top:59.5px" width="7" height="5" fill="none" stroke="#d6ead0" stroke-width="1.25"><path d="M0.8 0.8 L3.5 3.5 L6.2 0.8"/></svg>
<svg style="left:1890px;top:52px" width="17" height="17" fill="none" stroke="#222" stroke-width="1.1"><circle cx="6" cy="7" r="3"/><path d="M0.7 16.5 C1 12.5 3 10.8 6 10.8 C9 10.8 11 12.5 11.3 16.5"/><path d="M8.5 1 H16 V6.5 H13 L11 8.5 V6.5"/></svg>
<div style="position:absolute;left:7px;top:74.5px;width:1905px;height:93px;background:#fefefe;border-radius:8px;box-shadow:0 2px 1.5px rgba(0,0,0,0.28);"></div>
<div style="position:absolute;left:170px;top:80px;width:1px;height:83px;background:#c8c8c8;"></div>
<div style="position:absolute;left:388px;top:80px;width:1px;height:83px;background:#c8c8c8;"></div>
<div style="position:absolute;left:669px;top:80px;width:1px;height:83px;background:#c8c8c8;"></div>
<div style="position:absolute;left:819px;top:80px;width:1px;height:83px;background:#c8c8c8;"></div>
<div style="position:absolute;left:1286px;top:80px;width:1px;height:83px;background:#c8c8c8;"></div>
<div style="position:absolute;left:1626px;top:80px;width:1px;height:83px;background:#c8c8c8;"></div>
<div style="position:absolute;left:1684px;top:80px;width:1px;height:83px;background:#c8c8c8;"></div>
<div style="position:absolute;left:1741px;top:80px;width:1px;height:83px;background:#c8c8c8;"></div>
<div style="position:absolute;left:1814px;top:80px;width:1px;height:83px;background:#c8c8c8;"></div>
<div style="position:absolute;left:1868px;top:80px;width:1px;height:83px;background:#c8c8c8;"></div>
<div class="t" style="left:22px;top:154px;width:120px;text-align:center;font-size:11.5px;color:#141414;transform:scaleX(0.9026);">Clipboard</div>
<div class="t" style="left:211px;top:154px;width:120px;text-align:center;font-size:11.5px;color:#141414;transform:scaleX(0.8284);">Font</div>
<div class="t" style="left:461px;top:154px;width:120px;text-align:center;font-size:11.5px;color:#141414;transform:scaleX(0.8622);">Alignment</div>
<div class="t" style="left:676px;top:154px;width:120px;text-align:center;font-size:11.5px;color:#141414;transform:scaleX(0.9004);">Number</div>
<div class="t" style="left:993px;top:154px;width:120px;text-align:center;font-size:11.5px;color:#141414;transform:scaleX(0.7994);">Styles</div>
<div class="t" style="left:1295px;top:154px;width:120px;text-align:center;font-size:11.5px;color:#141414;transform:scaleX(0.7832);">Cells</div>
<div class="t" style="left:1464px;top:154px;width:120px;text-align:center;font-size:11.5px;color:#141414;transform:scaleX(0.8556);">Editing</div>
<div class="t" style="left:1594px;top:154px;width:120px;text-align:center;font-size:11.5px;color:#141414;transform:scaleX(0.8930);">Add-ins</div>
<div class="t" style="left:1717px;top:154px;width:120px;text-align:center;font-size:11.5px;color:#141414;transform:scaleX(0.8950);">Adobe Acrobat</div>
<div class="t" style="left:1780px;top:154px;width:120px;text-align:center;font-size:11.5px;color:#141414;transform:scaleX(0.8523);">Solver</div>
<svg style="left:159px;top:155px" width="9" height="9" fill="none" stroke="#444" stroke-width="1"><path d="M0.5 5 V0.5 H5"/><path d="M3 3 L8 8 M4.5 8 H8 V4.5"/></svg>
<svg style="left:377px;top:155px" width="9" height="9" fill="none" stroke="#444" stroke-width="1"><path d="M0.5 5 V0.5 H5"/><path d="M3 3 L8 8 M4.5 8 H8 V4.5"/></svg>
<svg style="left:658px;top:155px" width="9" height="9" fill="none" stroke="#444" stroke-width="1"><path d="M0.5 5 V0.5 H5"/><path d="M3 3 L8 8 M4.5 8 H8 V4.5"/></svg>
<svg style="left:808px;top:155px" width="9" height="9" fill="none" stroke="#444" stroke-width="1"><path d="M0.5 5 V0.5 H5"/><path d="M3 3 L8 8 M4.5 8 H8 V4.5"/></svg>
<svg style="left:26px;top:81px" width="30" height="32"><rect x="1.5" y="3.5" width="19" height="24" rx="1" fill="#fff" stroke="#e0641c" stroke-width="2"/><rect x="5.5" y="1" width="11" height="5" rx="1.2" fill="#fff" stroke="#555" stroke-width="1.1"/><rect x="14" y="13.5" width="13" height="16" rx="1" fill="#fff" stroke="#333" stroke-width="1.4"/></svg>
<div class="t" style="left:25px;top:116px;font-size:12.5px;color:#181818;font-weight:normal;transform:scaleX(0.8074);transform-origin:left;-webkit-text-stroke:0.25px #181818;">Paste</div>
<svg style="left:35px;top:134.5px" width="7" height="5" fill="none" stroke="#222" stroke-width="1.25"><path d="M0.8 0.8 L3.5 3.5 L6.2 0.8"/></svg>
<svg style="left:64px;top:82px" width="14" height="16"><path d="M3 1 L9.5 11 M11 1 L4.5 11" fill="none" stroke="#333" stroke-width="1.1"/><circle cx="3.8" cy="12.8" r="2.1" fill="#1f5fc8"/><circle cx="9.8" cy="12.8" r="2.1" fill="#1f5fc8"/></svg>
<div class="t" style="left:81px;top:84px;font-size:12.5px;color:#181818;font-weight:normal;transform:scaleX(0.8834);transform-origin:left;-webkit-text-stroke:0.25px #181818;">Cut</div>
<svg style="left:63px;top:105px" width="15" height="17" fill="none" stroke="#333" stroke-width="1.1"><path d="M1 1 H6 V12 H1 Z"/><path d="M5 4 H10 L14 8 V16 H5 Z" fill="#fff"/><path d="M7 10 H12 M7 12.5 H12"/></svg>
<div class="t" style="left:81px;top:108px;font-size:12.5px;color:#181818;font-weight:normal;transform:scaleX(0.9084);transform-origin:left;-webkit-text-stroke:0.25px #181818;">Copy</div>
<svg style="left:124px;top:111.5px" width="7" height="5" fill="none" stroke="#222" stroke-width="1.25"><path d="M0.8 0.8 L3.5 3.5 L6.2 0.8"/></svg>
<svg style="left:62px;top:129px" width="18" height="18"><path d="M1.5 7.5 L5.5 5 L10 9.5 L7.5 13.5 Z" fill="#f5a623" stroke="#e0301e" stroke-width="1.4" stroke-linejoin="round"/><path d="M3.5 8.5 L7.5 12" stroke="#e0301e" stroke-width="1"/><path d="M6 4.5 L9 2.5 L12.5 6 L10.5 9 Z" fill="#fff" stroke="#222" stroke-width="1.3" stroke-linejoin="round"/><path d="M10.5 3.5 L14.5 0.8 L16 2.3 L13.3 6.2" fill="none" stroke="#222" stroke-width="1.3" stroke-linejoin="round"/></svg>
<div class="t" style="left:82px;top:132px;font-size:12.5px;color:#181818;font-weight:normal;transform:scaleX(0.8853);transform-origin:left;-webkit-text-stroke:0.25px #181818;">Format Painter</div>
<div style="position:absolute;left:178px;top:85px;width:107px;height:23px;border:1px solid #8c8c8c;border-radius:4px;background:#fff;"></div>
<div class="t" style="left:180px;top:91px;font-size:12.5px;color:#1a1a1a;font-weight:normal;transform:scaleX(0.9234);transform-origin:left;-webkit-text-stroke:0.25px #1a1a1a;">Aptos Narrow</div>
<svg style="left:275px;top:94.5px" width="7" height="5" fill="none" stroke="#222" stroke-width="1.25"><path d="M0.8 0.8 L3.5 3.5 L6.2 0.8"/></svg>
<div style="position:absolute;left:286.5px;top:85px;width:47px;height:23px;border:1px solid #8c8c8c;border-radius:4px;background:#fff;"></div>
<div class="t" style="left:289px;top:91px;font-size:12.5px;color:#1a1a1a;font-weight:normal;-webkit-text-stroke:0.25px #1a1a1a;">11</div>
<svg style="left:324px;top:94.5px" width="7" height="5" fill="none" stroke="#222" stroke-width="1.25"><path d="M0.8 0.8 L3.5 3.5 L6.2 0.8"/></svg>
<div class="t" style="left:340px;top:89px;font-size:15px;color:#222;font-weight:normal;-webkit-text-stroke:0.25px #222;">A</div>
<svg style="left:351px;top:89px" width="6" height="4" fill="none" stroke="#2563c9" stroke-width="1.1"><path d="M0.5 3.5 l2.5 -2.5 l2.5 2.5"/></svg>
<div class="t" style="left:365px;top:91px;font-size:12.5px;color:#222;font-weight:normal;-webkit-text-stroke:0.25px #222;">A</div>
<svg style="left:373px;top:90px" width="6" height="4" fill="none" stroke="#2563c9" stroke-width="1.1"><path d="M0.5 0.5 l2.5 2.5 l2.5 -2.5"/></svg>
<div class="t" style="left:184px;top:119px;font-size:13.5px;color:#222;font-weight:bold;">B</div>
<div class="t" style="left:209px;top:119px;font-size:13.5px;color:#222;font-weight:normal;-webkit-text-stroke:0.25px #222;font-family:"Liberation Serif";"><i>I</i></div>
<div class="t" style="left:231px;top:119px;font-size:13.5px;color:#222;font-weight:normal;-webkit-text-stroke:0.25px #222;"><u>U</u></div>
<svg style="left:252px;top:125.5px" width="7" height="5" fill="none" stroke="#222" stroke-width="1.25"><path d="M0.8 0.8 L3.5 3.5 L6.2 0.8"/></svg>
<div style="position:absolute;left:264.5px;top:115px;width:1px;height:22px;background:#c8c8c8;"></div>
<svg style="left:270px;top:119px" width="15" height="15" fill="none" stroke="#333" stroke-width="1.1"><rect x="0.5" y="0.5" width="13.5" height="13.5"/><path d="M7.25 1 V14 M1 7.25 H14" stroke-dasharray="1 1"/></svg>
<svg style="left:292px;top:125.5px" width="7" height="5" fill="none" stroke="#222" stroke-width="1.25"><path d="M0.8 0.8 L3.5 3.5 L6.2 0.8"/></svg>
<div style="position:absolute;left:305px;top:115px;width:1px;height:22px;background:#c8c8c8;"></div>
<svg style="left:311px;top:118px" width="16" height="17"><path d="M2 7 L7 2 L12 7 L7 12 Z" fill="none" stroke="#333" stroke-width="1.1"/><path d="M11 4 C13 4 14 6 13.5 8" fill="none" stroke="#2563c9" stroke-width="1.2"/><rect x="0" y="13.5" width="15" height="3" fill="#f7ef7a"/></svg>
<svg style="left:333px;top:125.5px" width="7" height="5" fill="none" stroke="#222" stroke-width="1.25"><path d="M0.8 0.8 L3.5 3.5 L6.2 0.8"/></svg>
<svg style="left:348px;top:117px" width="16" height="18"><path d="M3 12 L8 1 L13 12 M5 8 H11" fill="none" stroke="#333" stroke-width="1.3"/><rect x="0.5" y="14" width="15" height="3.5" fill="#111"/></svg>
<svg style="left:371px;top:125.5px" width="7" height="5" fill="none" stroke="#222" stroke-width="1.25"><path d="M0.8 0.8 L3.5 3.5 L6.2 0.8"/></svg>
<svg style="left:0;top:0" width="1920" height="200" fill="none" stroke="#303030" stroke-width="1.5" stroke-linecap="round"><path d="M401.5 89.5 H414.5 M403.8 93.5 H412.2 M401.5 97.3 H414.5"/></svg>
<svg style="left:0;top:0" width="1920" height="200" fill="none" stroke="#303030" stroke-width="1.5" stroke-linecap="round"><path d="M425.5 92.2 H438.5 M427.8 96.2 H436.2 M425.5 100 H438.5"/></svg>
<div style="position:absolute;left:445px;top:85.3px;width:21.6px;height:22.3px;background:#d9d9d9;border:1.2px solid #555;border-radius:4px;"></div>
<svg style="left:0;top:0" width="1920" height="200" fill="none" stroke="#303030" stroke-width="1.5" stroke-linecap="round"><path d="M449.5 96.1 H462.5 M451.8 99.9 H460.2 M449.5 103.7 H462.5"/></svg>
<div style="position:absolute;left:468.8px;top:85.5px;width:1px;height:22px;background:#d0d0d0;"></div>
<svg style="left:473px;top:87px" width="22" height="20"><text x="6.5" y="10" font-size="9" fill="#222" text-anchor="middle" font-family="Liberation Sans" transform="rotate(-45 6.5 7)">ab</text><path d="M6.5 16.5 L15.5 7.5" stroke="#1f5fc8" stroke-width="1.3" fill="none"/><path d="M12 6 H17 V11 Z" fill="#1f5fc8"/></svg>
<svg style="left:496px;top:96.0px" width="7" height="5" fill="none" stroke="#222" stroke-width="1.2"><path d="M0.8 0.8 L3.5 3.5 L6.2 0.8"/></svg>
<div style="position:absolute;left:421px;top:115.6px;width:22px;height:22.3px;background:#d9d9d9;border:1.2px solid #555;border-radius:4px;"></div>
<svg style="left:0;top:0" width="1920" height="200" fill="none" stroke="#303030" stroke-width="1.5" stroke-linecap="round"><path d="M401.5 120.6 H414.5 M401.5 124.3 H411 M401.5 128.1 H414.5 M401.5 132 H411"/></svg>
<svg style="left:0;top:0" width="1920" height="200" fill="none" stroke="#303030" stroke-width="1.5" stroke-linecap="round"><path d="M425.5 120.6 H438.5 M427.8 124.3 H436.2 M425.5 128.1 H438.5 M427.8 132 H436.2"/></svg>
<svg style="left:0;top:0" width="1920" height="200" fill="none" stroke="#303030" stroke-width="1.5" stroke-linecap="round"><path d="M449.5 120.6 H462.5 M453 124.3 H462.5 M449.5 128.1 H462.5 M453 132 H462.5"/></svg>
<div style="position:absolute;left:468.8px;top:116px;width:1px;height:22px;background:#d0d0d0;"></div>
<svg style="left:0;top:0" width="1920" height="200" fill="none" stroke="#303030" stroke-width="1.5" stroke-linecap="round"><path d="M475.5 120.6 H488.5 M484 124.3 H488.5 M484 128.1 H488.5 M475.5 132 H488.5"/></svg>
<svg style="left:474px;top:122px" width="10" height="8"><path d="M1.5 4 H8" stroke="#1f5fc8" stroke-width="1.6"/><path d="M0.5 4 L4 0.8 V7.2 Z" fill="#1f5fc8"/></svg>
<svg style="left:0;top:0" width="1920" height="200" fill="none" stroke="#303030" stroke-width="1.5" stroke-linecap="round"><path d="M499.5 120.6 H512.5 M508 124.3 H512.5 M508 128.1 H512.5 M499.5 132 H512.5"/></svg>
<svg style="left:498px;top:122px" width="10" height="8"><path d="M0.5 4 H6.5" stroke="#1f5fc8" stroke-width="1.6"/><path d="M9 4 L5.5 0.8 V7.2 Z" fill="#1f5fc8"/></svg>
<div style="position:absolute;left:522.5px;top:85px;width:1px;height:52px;background:#c8c8c8;"></div>
<svg style="left:534px;top:88px" width="16" height="18"><text x="0" y="8.3" font-size="10" fill="#222" font-family="Liberation Sans">ab</text><text x="0.3" y="15.8" font-size="10" fill="#222" font-family="Liberation Sans">c</text><path d="M12.8 8.8 C14.5 10.5 14 13.8 11 14.3 H7.2" fill="none" stroke="#1f5fc8" stroke-width="1.5"/><path d="M9.2 11.8 L6.6 14.3 L9.2 16.8" fill="none" stroke="#1f5fc8" stroke-width="1.4"/></svg>
<div class="t" style="left:551px;top:91.5px;font-size:12.5px;color:#181818;font-weight:normal;transform:scaleX(0.9122);transform-origin:left;-webkit-text-stroke:0.25px #181818;">Wrap Text</div>
<svg style="left:532px;top:118.5px" width="16" height="16"><rect x="0.8" y="0.8" width="13.8" height="13.8" fill="#fff" stroke="#2a2a2a" stroke-width="1.3"/><path d="M1.5 3.3 H14 M1.5 12.2 H14 M7.7 1 V4 M7.7 11.5 V14.5" stroke="#777" stroke-width="1"/><rect x="1.2" y="5" width="13" height="5.5" fill="#2f72d8" stroke="#1848a8" stroke-width="0.8"/><path d="M3.5 7.75 H11.9 M5.2 6.3 L3.5 7.75 L5.2 9.2 M10.2 6.3 L11.9 7.75 L10.2 9.2" fill="none" stroke="#fff" stroke-width="0.9"/></svg>
<div class="t" style="left:551px;top:121.5px;font-size:12.5px;color:#181818;font-weight:normal;transform:scaleX(0.9090);transform-origin:left;-webkit-text-stroke:0.25px #181818;">Merge &amp; Center</div>
<svg style="left:647px;top:125.5px" width="7" height="5" fill="none" stroke="#222" stroke-width="1.25"><path d="M0.8 0.8 L3.5 3.5 L6.2 0.8"/></svg>
<div style="position:absolute;left:677px;top:85px;width:135px;height:23px;border:1px solid #8c8c8c;border-radius:4px;background:#fff;"></div>
<div class="t" style="left:679.5px;top:91.5px;font-size:12.5px;color:#1a1a1a;font-weight:normal;transform:scaleX(0.8850);transform-origin:left;-webkit-text-stroke:0.25px #1a1a1a;">Percentage</div>
<svg style="left:802px;top:94.5px" width="7" height="5" fill="none" stroke="#222" stroke-width="1.25"><path d="M0.8 0.8 L3.5 3.5 L6.2 0.8"/></svg>
<div class="t" style="left:683px;top:119.5px;font-size:15.5px;color:#222;font-weight:normal;-webkit-text-stroke:0.25px #222;">$</div>
<svg style="left:703px;top:125.5px" width="7" height="5" fill="none" stroke="#222" stroke-width="1.25"><path d="M0.8 0.8 L3.5 3.5 L6.2 0.8"/></svg>
<div class="t" style="left:719px;top:119.5px;font-size:15.5px;color:#222;font-weight:normal;-webkit-text-stroke:0.25px #222;">%</div>
<svg style="left:746px;top:120px" width="9" height="13"><circle cx="4" cy="5" r="3" fill="#222"/><path d="M6.5 5.5 C6.5 9 5 11 2 12.5" fill="none" stroke="#222" stroke-width="1.8"/></svg>
<div style="position:absolute;left:763px;top:116px;width:1px;height:21px;background:#c8c8c8;"></div>
<svg style="left:768px;top:118px" width="20" height="18"><text x="10.5" y="8" font-size="9.5" fill="#222" font-family="Liberation Sans">0</text><text x="3.5" y="15.5" font-size="9.5" fill="#222" font-family="Liberation Sans">.00</text><path d="M10 4.5 H2 M4.8 1.8 L1.8 4.5 L4.8 7.2" fill="none" stroke="#1f5fc8" stroke-width="1.3"/></svg>
<svg style="left:792px;top:118px" width="20" height="18"><text x="3.5" y="8" font-size="9.5" fill="#222" font-family="Liberation Sans">.00</text><text x="7.5" y="15.5" font-size="9.5" fill="#222" font-family="Liberation Sans">.0</text><path d="M1 12 H9 M6.2 9.3 L9.2 12 L6.2 14.7" fill="none" stroke="#1f5fc8" stroke-width="1.3"/></svg>
<svg style="left:848px;top:85px" width="28" height="22"><rect x="0.7" y="0.7" width="26" height="20.5" fill="#fff" stroke="#333" stroke-width="1.3"/><rect x="1.5" y="1.5" width="18" height="5.5" fill="#e0443a"/><rect x="1.5" y="7.5" width="6" height="5.5" fill="#2b6fd6"/><rect x="1.5" y="14" width="18" height="6.5" fill="#e0443a"/><path d="M1 7.3 H27 M1 13.6 H27 M9 1 V21 M20 1 V21" stroke="#333" stroke-width="1"/></svg>
<div class="t" style="left:833px;top:115px;font-size:12.5px;color:#181818;font-weight:normal;transform:scaleX(0.9310);transform-origin:left;-webkit-text-stroke:0.25px #181818;">Conditional</div>
<div class="t" style="left:829px;top:130px;font-size:12.5px;color:#181818;font-weight:normal;transform:scaleX(0.9312);transform-origin:left;-webkit-text-stroke:0.25px #181818;">Formatting</div>
<svg style="left:888px;top:133.5px" width="7" height="5" fill="none" stroke="#222" stroke-width="1.25"><path d="M0.8 0.8 L3.5 3.5 L6.2 0.8"/></svg>
<svg style="left:910px;top:85px" width="30" height="26"><rect x="0.7" y="0.7" width="26" height="20.5" fill="#fff" stroke="#333" stroke-width="1.3"/><rect x="10" y="7.5" width="16.5" height="13" fill="#2b6fd6"/><path d="M1 7.3 H27 M1 13.6 H27 M9 1 V21 M18 1 V21" stroke="#333" stroke-width="1"/><path d="M28 4 L17 17" stroke="#333" stroke-width="3.2"/><path d="M28 4 L17 17" stroke="#fff" stroke-width="1.6"/><path d="M15 16 C13 18 13 21 12 23 C15 23 18 21 18.5 18 Z" fill="#2b6fd6"/></svg>
<div class="t" style="left:901px;top:115px;font-size:12.5px;color:#181818;font-weight:normal;transform:scaleX(0.8812);transform-origin:left;-webkit-text-stroke:0.25px #181818;">Format as</div>
<div class="t" style="left:906px;top:130px;font-size:12.5px;color:#181818;font-weight:normal;transform:scaleX(0.9244);transform-origin:left;-webkit-text-stroke:0.25px #181818;">Table</div>
<svg style="left:937px;top:133.5px" width="7" height="5" fill="none" stroke="#222" stroke-width="1.25"><path d="M0.8 0.8 L3.5 3.5 L6.2 0.8"/></svg>
<div style="position:absolute;left:954px;top:85.5px;width:323px;height:58px;border:1px solid #c6c6c6;border-radius:5px;background:#fff;"></div>
<div style="position:absolute;left:958px;top:91px;width:94px;height:21px;background:#1e6a10;"></div>
<div class="t" style="left:962px;top:95px;font-size:12.5px;color:#e6f0e0;font-weight:normal;transform:scaleX(1.0121);transform-origin:left;">Accent6</div>
<div class="t" style="left:1062px;top:95px;font-size:12.5px;color:#181818;font-weight:bold;transform:scaleX(0.9433);transform-origin:left;">Comma</div>
<div class="t" style="left:1161px;top:95px;font-size:12.5px;color:#181818;font-weight:bold;transform:scaleX(0.9277);transform-origin:left;">Comma [0]</div>
<div class="t" style="left:962px;top:122px;font-size:12.5px;color:#181818;font-weight:bold;transform:scaleX(0.9224);transform-origin:left;">Currency</div>
<div class="t" style="left:1062px;top:122px;font-size:12.5px;color:#181818;font-weight:bold;transform:scaleX(0.9087);transform-origin:left;">Currency [0]</div>
<div style="position:absolute;left:1155px;top:114.5px;width:100px;height:27.5px;border:1.5px solid #444;background:#fff;box-shadow:inset 0 0 0 1.5px #d0d0d0;"></div>
<div class="t" style="left:1162px;top:122px;font-size:12.5px;color:#181818;font-weight:bold;transform:scaleX(0.9653);transform-origin:left;">Percent</div>
<div style="position:absolute;left:1255.5px;top:85.5px;width:22px;height:58px;border:1px solid #9a9a9a;border-radius:0 5px 5px 0;background:#fff;"></div>
<svg style="left:1262px;top:110px" width="8" height="8" fill="none" stroke="#333" stroke-width="1.1"><path d="M0.5 1 H7.5"/><path d="M1 4 l3 3 l3 -3"/></svg>
<svg style="left:1290px;top:78px" width="130" height="34" fill="none" stroke-linejoin="round"><path d="M12.2 7.4 H38.8 V28.1 H12.2 Z M21 7.4 V28.1 M29.8 7.4 V28.1 M12.2 14.6 H38.8 M12.2 21.3 H38.8" stroke="#2e2e2e" stroke-width="1.3"/><rect x="17" y="14.4" width="23.4" height="7.3" rx="1" fill="#2f72d8" stroke="#1848a8" stroke-width="0.9"/><path d="M10.5 17.5 H24" stroke="#1f5fc8" stroke-width="3.4"/><path d="M11.5 17.5 H23" stroke="#dbe8fb" stroke-width="1"/><path d="M17.6 11.5 L10.3 17.5 L17.6 23.7" stroke="#1f5fc8" stroke-width="1.4"/><path d="M52.8 14.6 V7.4 H78.9 V28.1 H52.8 V21.3 M61.3 7.4 V14.6 M61.3 21.3 V28.1 M70.1 7.4 V28.1 M52.8 14.6 H78.9 M52.8 21.3 H78.9" stroke="#2e2e2e" stroke-width="1.3"/><path d="M56.5 14.4 H69 L71.5 18 L69 21.7 H56.5 Z" fill="#2f72d8" stroke="#1848a8" stroke-width="0.9"/><path d="M69.6 13.2 L80.2 23.7 M80.2 13.2 L69.6 23.7" stroke="#e8402a" stroke-width="1.5"/><path d="M93.4 7.4 H119.5 V28.1 H93.4 Z M100.2 7.4 V28.1 M112.7 7.4 V28.1 M93.4 14.6 H119.5 M93.4 21.3 H119.5" stroke="#2e2e2e" stroke-width="1.3"/><rect x="100.2" y="14.6" width="12.5" height="6.7" fill="#2f72d8" stroke="#1848a8" stroke-width="1"/><path d="M99.2 4.6 H113.7 M99.2 3.2 V6 M113.7 3.2 V6" stroke="#1f5fc8" stroke-width="1.3"/></svg>
<div class="t" style="left:1300px;top:116px;font-size:12.5px;color:#181818;font-weight:normal;transform:scaleX(0.9021);transform-origin:left;-webkit-text-stroke:0.25px #181818;">Insert</div>
<svg style="left:1312px;top:134.5px" width="7" height="5" fill="none" stroke="#222" stroke-width="1.25"><path d="M0.8 0.8 L3.5 3.5 L6.2 0.8"/></svg>
<div class="t" style="left:1339px;top:116px;font-size:12.5px;color:#181818;font-weight:normal;transform:scaleX(0.9393);transform-origin:left;-webkit-text-stroke:0.25px #181818;">Delete</div>
<svg style="left:1353px;top:134.5px" width="7" height="5" fill="none" stroke="#222" stroke-width="1.25"><path d="M0.8 0.8 L3.5 3.5 L6.2 0.8"/></svg>
<div class="t" style="left:1380px;top:114.5px;font-size:12.5px;color:#181818;font-weight:normal;transform:scaleX(0.9070);transform-origin:left;-webkit-text-stroke:0.25px #181818;">Format</div>
<svg style="left:1393px;top:133.5px" width="7" height="5" fill="none" stroke="#222" stroke-width="1.25"><path d="M0.8 0.8 L3.5 3.5 L6.2 0.8"/></svg>
<svg style="left:1436px;top:81px" width="15" height="17" fill="none" stroke="#222" stroke-width="1.3"><path d="M12.8 2 H1.5 L8 8.3 L1.5 14.8 H12.8"/></svg>
<div class="t" style="left:1454px;top:84.5px;font-size:12.5px;color:#181818;font-weight:normal;transform:scaleX(0.9124);transform-origin:left;-webkit-text-stroke:0.25px #181818;">AutoSum</div>
<svg style="left:1517px;top:89.5px" width="7" height="5" fill="none" stroke="#222" stroke-width="1.25"><path d="M0.8 0.8 L3.5 3.5 L6.2 0.8"/></svg>
<svg style="left:1435px;top:106px" width="16" height="15"><rect x="0.7" y="0.7" width="14.6" height="13.6" fill="#fff" stroke="#333" stroke-width="1.3"/><path d="M0.7 3 H15" stroke="#333" stroke-width="1"/><path d="M8 5 V11.5 M5.5 9 L8 11.5 L10.5 9" fill="none" stroke="#2b6fd6" stroke-width="1.3"/></svg>
<div class="t" style="left:1454px;top:108.5px;font-size:12.5px;color:#181818;font-weight:normal;-webkit-text-stroke:0.25px #181818;">Fill</div>
<svg style="left:1472px;top:111.5px" width="7" height="5" fill="none" stroke="#222" stroke-width="1.25"><path d="M0.8 0.8 L3.5 3.5 L6.2 0.8"/></svg>
<svg style="left:1434px;top:129px" width="17" height="17"><path d="M1.5 10.5 L9.5 2.5 L15 8 L7 16 Z" fill="none" stroke="#7b3fb0" stroke-width="1.4" stroke-linejoin="round"/><path d="M2.5 10.5 L5.5 7.5 L11 13 L8 15.5 Z" fill="#a27bd0" stroke="#7b3fb0" stroke-width="0.8"/></svg>
<div class="t" style="left:1454px;top:132.5px;font-size:12.5px;color:#181818;font-weight:normal;transform:scaleX(0.9005);transform-origin:left;-webkit-text-stroke:0.25px #181818;">Clear</div>
<svg style="left:1483px;top:135.5px" width="7" height="5" fill="none" stroke="#222" stroke-width="1.25"><path d="M0.8 0.8 L3.5 3.5 L6.2 0.8"/></svg>
<svg style="left:1536px;top:82px" width="32" height="28" fill="none" stroke-width="1.4"><path d="M3 13 L7.5 1.5 L12 13 M4.6 9 H10.4" stroke="#1f5fc8"/><path d="M3.5 15.5 H11.5 L3.5 26 H12" stroke="#222"/><path d="M15 7.2 H30 L24.5 14.5 V22.5 H21 V14.5 Z" stroke="#222" stroke-linejoin="round"/></svg>
<div class="t" style="left:1536px;top:115px;font-size:12.5px;color:#181818;font-weight:normal;transform:scaleX(0.9485);transform-origin:left;-webkit-text-stroke:0.25px #181818;">Sort &amp;</div>
<div class="t" style="left:1534px;top:130px;font-size:12.5px;color:#181818;font-weight:normal;transform:scaleX(0.9448);transform-origin:left;-webkit-text-stroke:0.25px #181818;">Filter</div>
<svg style="left:1562px;top:133.5px" width="7" height="5" fill="none" stroke="#222" stroke-width="1.25"><path d="M0.8 0.8 L3.5 3.5 L6.2 0.8"/></svg>
<svg style="left:1580px;top:82px" width="32" height="32" fill="none" stroke="#333" stroke-width="1.3"><circle cx="20" cy="10" r="8.5"/><path d="M14 16 L2 28"/></svg>
<div class="t" style="left:1579px;top:115px;font-size:12.5px;color:#181818;font-weight:normal;transform:scaleX(0.9110);transform-origin:left;-webkit-text-stroke:0.25px #181818;">Find &amp;</div>
<div class="t" style="left:1576px;top:130px;font-size:12.5px;color:#181818;font-weight:normal;transform:scaleX(0.8891);transform-origin:left;-webkit-text-stroke:0.25px #181818;">Select</div>
<svg style="left:1610px;top:133.5px" width="7" height="5" fill="none" stroke="#222" stroke-width="1.25"><path d="M0.8 0.8 L3.5 3.5 L6.2 0.8"/></svg>
<svg style="left:1642px;top:82px" width="28" height="28"><rect x="0.8" y="0.8" width="25.4" height="25.4" fill="#fbe3dd" stroke="#c9381f" stroke-width="1.6"/><rect x="4" y="4" width="8.5" height="8.5" rx="1" fill="#fff" stroke="#d0442c" stroke-width="1.4"/><rect x="14.5" y="4" width="8.5" height="8.5" rx="1" fill="#fff" stroke="#d0442c" stroke-width="1.4"/><rect x="4" y="14.5" width="8.5" height="8.5" rx="1" fill="#fff" stroke="#d0442c" stroke-width="1.4"/><rect x="14.5" y="14.5" width="8.5" height="8.5" rx="1" fill="#fff" stroke="#d0442c" stroke-width="1.4"/></svg>
<div class="t" style="left:1636px;top:115px;font-size:12.5px;color:#181818;font-weight:normal;transform:scaleX(0.9424);transform-origin:left;-webkit-text-stroke:0.25px #181818;">Add-ins</div>
<svg style="left:1699px;top:83px" width="29" height="27"><defs><linearGradient id="cpA" x1="0" y1="0" x2="0" y2="1"><stop offset="0" stop-color="#1e6ad8"/><stop offset="0.3" stop-color="#1040c0"/><stop offset="0.42" stop-color="#256e2c"/><stop offset="0.7" stop-color="#2a6a28"/><stop offset="0.8" stop-color="#7a5a2a"/><stop offset="0.9" stop-color="#f0a020"/><stop offset="1" stop-color="#f0a020"/></linearGradient><linearGradient id="cpB" x1="0" y1="0" x2="0" y2="1"><stop offset="0" stop-color="#6a28e0"/><stop offset="0.3" stop-color="#5a2ab0"/><stop offset="0.42" stop-color="#e0452e"/><stop offset="1" stop-color="#e0452e"/></linearGradient></defs><path d="M4 0 H19 C21 0 22 1.5 22.5 4 L23 7.5 L14.5 8 L11.5 19 H3 C1 19 0 17.5 0.2 15.5 L1.5 4 C2 1.5 2.8 0 4 0 Z" fill="url(#cpA)"/><path d="M17.5 7 H25 C27.5 7 28.3 9 27.8 11 L24.5 23 C24 25 22.5 26 20.5 26 H10 C8 26 7 24.5 6.5 22.5 L6 19 H11.5 L14.5 8 C15 7.3 16 7 17.5 7 Z" fill="url(#cpB)"/><path d="M16.5 8.2 L12.2 18.6" stroke="#fff" stroke-width="2.6"/></svg>
<div class="t" style="left:1695px;top:117px;font-size:12.5px;color:#181818;font-weight:normal;transform:scaleX(0.9681);transform-origin:left;-webkit-text-stroke:0.25px #181818;">Copilot</div>
<svg style="left:1709px;top:135.5px" width="7" height="5" fill="none" stroke="#222" stroke-width="1.25"><path d="M0.8 0.8 L3.5 3.5 L6.2 0.8"/></svg>
<svg style="left:1769px;top:84px" width="26" height="26" fill="none" stroke="#1f55d6" stroke-width="1.4"><path d="M9.5 22 H3.2 a2.2 2.2 0 0 1 -2.2 -2.2 V3.2 a2.2 2.2 0 0 1 2.2 -2.2 H12 L18.5 7.5 V13"/><path d="M8.5 5 V11.5 L4 16 M8.5 11.5 L14 14" stroke-width="1.2"/><g transform="rotate(-45 17.5 19)"><rect x="11.5" y="16.8" width="6.5" height="4.4" rx="2.2"/><rect x="17" y="16.8" width="6.5" height="4.4" rx="2.2"/></g></svg>
<div class="t" style="left:1762px;top:115px;font-size:12.5px;color:#181818;font-weight:normal;transform:scaleX(0.8845);transform-origin:left;-webkit-text-stroke:0.25px #181818;">Create</div>
<div class="t" style="left:1764px;top:130px;font-size:12.5px;color:#181818;font-weight:normal;transform:scaleX(0.8511);transform-origin:left;-webkit-text-stroke:0.25px #181818;">a PDF</div>
<svg style="left:1826px;top:86px" width="30" height="22"><path d="M1 6 L5 2 H14 L16 4 H28 V18 H4 Z" fill="#2d6cc0"/><path d="M3 8 L27 5 L25 19 L5 18 Z" fill="#4a8ad8"/><circle cx="16" cy="11" r="4.5" fill="#f4d04a" stroke="#555" stroke-width="0.8"/><rect x="14" y="15" width="4" height="4" fill="#333"/></svg>
<div class="t" style="left:1826px;top:115px;font-size:12.5px;color:#181818;font-weight:normal;transform:scaleX(0.8916);transform-origin:left;-webkit-text-stroke:0.25px #181818;">Solver</div>
<svg style="left:1893px;top:152px" width="12" height="8" fill="none" stroke="#333" stroke-width="1.2"><path d="M1 1 l5 5 l5 -5"/></svg>
<div style="position:absolute;left:8px;top:175.5px;width:285px;height:22px;border:1px solid #c4c4c4;border-radius:4px;background:#fff;"></div>
<div class="t" style="left:13px;top:181px;font-size:12.5px;color:#1a1a1a;font-weight:normal;transform:scaleX(0.9871);transform-origin:left;-webkit-text-stroke:0.25px #1a1a1a;">L39</div>
<svg style="left:278px;top:183px" width="11" height="8" fill="none" stroke="#333" stroke-width="1.2"><path d="M1 1.5 l4.5 4.5 l4.5 -4.5"/></svg>
<div style="position:absolute;left:302px;top:180px;width:2px;height:2px;background:#333;border-radius:1px;"></div>
<div style="position:absolute;left:302px;top:185px;width:2px;height:2px;background:#333;border-radius:1px;"></div>
<div style="position:absolute;left:302px;top:190px;width:2px;height:2px;background:#333;border-radius:1px;"></div>
<div style="position:absolute;left:313px;top:175.5px;width:79px;height:22px;border:1px solid #c4c4c4;border-radius:4px;background:#fff;"></div>
<svg style="left:318px;top:180px" width="13" height="13" fill="none" stroke="#666" stroke-width="1.1"><path d="M1 1 L12 12 M12 1 L1 12"/></svg>
<svg style="left:339px;top:180px" width="15" height="13" fill="none" stroke="#666" stroke-width="1.1"><path d="M1 7 L5 11.5 L14 1.5"/></svg>
<div class="t" style="left:363px;top:178px;font-size:15px;color:#222;font-weight:bold;font-family:"Liberation Serif";"><i>fx</i></div>
<svg style="left:380px;top:183px" width="9" height="7" fill="none" stroke="#555" stroke-width="1.1"><path d="M0.5 1 l4 4 l4 -4"/></svg>
<div style="position:absolute;left:398px;top:175.5px;width:1514px;height:22px;border:1px solid #c4c4c4;border-radius:4px;background:#fff;"></div>
<div class="t" style="left:406px;top:181px;font-size:12.5px;color:#1a1a1a;font-weight:normal;transform:scaleX(0.9992);transform-origin:left;-webkit-text-stroke:0.25px #1a1a1a;">74%</div>
<svg style="left:1895px;top:183px" width="11" height="8" fill="none" stroke="#333" stroke-width="1.2"><path d="M1 1.5 l4.5 4.5 l4.5 -4.5"/></svg>
<div style="position:absolute;left:0px;top:985px;width:1920px;height:30px;background:#dadada;"></div>
<svg style="left:23px;top:994px" width="7" height="11" fill="none" stroke="#555" stroke-width="1.1"><path d="M6 0.5 L1 5.5 L6 10.5"/></svg>
<svg style="left:54px;top:994px" width="7" height="11" fill="none" stroke="#555" stroke-width="1.1"><path d="M1 0.5 L6 5.5 L1 10.5"/></svg>
<div class="t" style="left:104px;top:993.8px;width:51px;text-align:center;font-size:13px;color:#1a1a1a;transform:scaleX(1.0272);">Index</div>
<div style="position:absolute;left:158.5px;top:991px;width:1px;height:17px;background:#b8b8b8;"></div>
<div style="position:absolute;left:162px;top:988.5px;width:53px;height:22.5px;background:#fdfb9c;border-radius:4px;"></div>
<div class="t" style="left:162px;top:993.8px;width:53px;text-align:center;font-size:13px;color:#1a1a1a;transform:scaleX(1.0126);">Global</div>
<div style="position:absolute;left:218.5px;top:991px;width:1px;height:17px;background:#b8b8b8;"></div>
<div style="position:absolute;left:223.5px;top:988.5px;width:34.5px;height:22.5px;background:#fdfb9c;border-radius:4px;"></div>
<div class="t" style="left:223.5px;top:993.8px;width:34.5px;text-align:center;font-size:13px;color:#1a1a1a;transform:scaleX(0.9550);">T12</div>
<div style="position:absolute;left:261.5px;top:991px;width:1px;height:17px;background:#b8b8b8;"></div>
<div style="position:absolute;left:266.5px;top:985px;width:70.5px;height:26px;background:#fbfbf2;border-radius:0 0 4px 4px;box-shadow:0 1px 1px rgba(0,0,0,0.15);"></div>
<div class="t" style="left:266.5px;top:991px;width:70.5px;text-align:center;font-size:13px;color:#111;font-weight:bold;transform:scaleX(0.9132);">Scenarios</div>
<div style="position:absolute;left:274.5px;top:1007.5px;width:54.5px;height:2px;background:#1e6e2a;"></div>
<div style="position:absolute;left:340.5px;top:991px;width:1px;height:17px;background:#b8b8b8;"></div>
<div style="position:absolute;left:345.5px;top:988.5px;width:99.0px;height:22.5px;background:#fdfb9c;border-radius:4px;"></div>
<div class="t" style="left:345.5px;top:993.8px;width:99.0px;text-align:center;font-size:13px;color:#1a1a1a;transform:scaleX(0.9412);">Rev and OPEX</div>
<div style="position:absolute;left:448.0px;top:991px;width:1px;height:17px;background:#b8b8b8;"></div>
<div style="position:absolute;left:453.5px;top:988.5px;width:49.0px;height:22.5px;background:#fdfb9c;border-radius:4px;"></div>
<div class="t" style="left:453.5px;top:993.8px;width:49.0px;text-align:center;font-size:13px;color:#1a1a1a;transform:scaleX(0.9540);">Loans</div>
<div style="position:absolute;left:506.0px;top:991px;width:1px;height:17px;background:#b8b8b8;"></div>
<div style="position:absolute;left:511px;top:988.5px;width:54.5px;height:22.5px;background:#fdfb9c;border-radius:4px;"></div>
<div class="t" style="left:511px;top:993.8px;width:54.5px;text-align:center;font-size:13px;color:#1a1a1a;transform:scaleX(0.9016);">CAPEX</div>
<div style="position:absolute;left:569.0px;top:991px;width:1px;height:17px;background:#b8b8b8;"></div>
<div style="position:absolute;left:573.5px;top:988.5px;width:107.5px;height:22.5px;background:#2d0a52;border-radius:4px;"></div>
<div class="t" style="left:573.5px;top:993.8px;width:107.5px;text-align:center;font-size:13px;color:#e9e2f2;transform:scaleX(0.9710);">Financial Ratios</div>
<div style="position:absolute;left:684.5px;top:991px;width:1px;height:17px;background:#b8b8b8;"></div>
<div style="position:absolute;left:689px;top:988.5px;width:76.5px;height:22.5px;background:#2d0a52;border-radius:4px;"></div>
<div class="t" style="left:689px;top:993.8px;width:76.5px;text-align:center;font-size:13px;color:#e9e2f2;transform:scaleX(1.0174);">12 Months</div>
<div style="position:absolute;left:769.0px;top:991px;width:1px;height:17px;background:#b8b8b8;"></div>
<div style="position:absolute;left:774px;top:988.5px;width:103px;height:22.5px;background:#2d0a52;border-radius:4px;"></div>
<div class="t" style="left:774px;top:993.8px;width:103px;text-align:center;font-size:13px;color:#e9e2f2;transform:scaleX(1.0402);">Monthly Detail</div>
<div style="position:absolute;left:880.5px;top:991px;width:1px;height:17px;background:#b8b8b8;"></div>
<div style="position:absolute;left:886px;top:988.5px;width:94.5px;height:22.5px;background:#2d0a52;border-radius:4px;"></div>
<div class="t" style="left:886px;top:993.8px;width:94.5px;text-align:center;font-size:13px;color:#e9e2f2;transform:scaleX(1.0067);">Annual Detail</div>
<div style="position:absolute;left:984.0px;top:991px;width:1px;height:17px;background:#b8b8b8;"></div>
<div style="position:absolute;left:989px;top:988.5px;width:53.5px;height:22.5px;background:#2d0a52;border-radius:4px;"></div>
<div class="t" style="left:989px;top:993.8px;width:53.5px;text-align:center;font-size:13px;color:#e9e2f2;transform:scaleX(0.9772);">Charts</div>
<div style="position:absolute;left:1046.0px;top:991px;width:1px;height:17px;background:#b8b8b8;"></div>
<svg style="left:1085px;top:993px" width="12" height="12" fill="none" stroke="#222" stroke-width="1.3"><path d="M6 0 V12 M0 6 H12"/></svg>
<div style="position:absolute;left:1686px;top:995px;width:2.5px;height:2.5px;background:#222;border-radius:50%;"></div>
<div style="position:absolute;left:1686px;top:999px;width:2.5px;height:2.5px;background:#222;border-radius:50%;"></div>
<div style="position:absolute;left:1686px;top:1003px;width:2.5px;height:2.5px;background:#222;border-radius:50%;"></div>
<svg style="left:1706px;top:995px" width="8" height="9"><polygon points="8,0 8,9 0,4.5" fill="#333"/></svg>
<div style="position:absolute;left:1718px;top:994.8px;width:161.5px;height:8.6px;background:#303030;border-radius:4.3px;"></div>
<svg style="left:1890px;top:995px" width="8" height="9"><polygon points="0,0 0,9 8,4.5" fill="#333"/></svg>
<div style="position:absolute;left:0px;top:1014.8px;width:1920px;height:1.4px;background:#fafafa;"></div>
<div style="position:absolute;left:0px;top:1016px;width:1920px;height:19.5px;background:#dadada;"></div>
<div class="t" style="left:11px;top:1020.5px;font-size:11px;color:#222;font-weight:normal;transform:scaleX(0.8733);transform-origin:left;-webkit-text-stroke:0.25px #222;">Ready</div>
<svg style="left:57px;top:1018px" width="14" height="13"><rect x="0.5" y="0.5" width="13" height="12" fill="none" stroke="#333" stroke-width="1"/><rect x="0.5" y="0.5" width="13" height="2.5" fill="#333"/><circle cx="8.5" cy="8" r="3.6" fill="#dadada" stroke="#333" stroke-width="1"/><circle cx="8.5" cy="8" r="1.5" fill="#333"/></svg>
<svg style="left:87px;top:1018px" width="14" height="14" fill="none" stroke="#333" stroke-width="1.1"><circle cx="6" cy="2.5" r="1.8"/><path d="M1 5.5 L6 5 L11 5.5 M6 5 V9 L3.5 13 M6 9 L7 11"/><path d="M8.5 9.5 L13 13.5 M13 9.5 L8.5 13.5"/></svg>
<div class="t" style="left:104px;top:1020.5px;font-size:11px;color:#111;font-weight:bold;transform:scaleX(0.8731);transform-origin:left;">Accessibility: Investigate</div>
<div style="position:absolute;left:1640px;top:1016px;width:38px;height:19px;background:#c4c4c4;"></div>
<svg style="left:1652px;top:1019px" width="13" height="13"><rect x="0" y="0" width="13" height="13" fill="#222"/><path d="M4.3 0 V13 M8.7 0 V13 M0 4.3 H13 M0 8.7 H13" stroke="#c4c4c4" stroke-width="1.1"/></svg>
<svg style="left:1690px;top:1019px" width="14" height="13" fill="none" stroke="#333" stroke-width="1.1"><rect x="0.5" y="0.5" width="13" height="12"/><rect x="3" y="2.5" width="8" height="8"/><path d="M4.5 5 H9.5 M4.5 7 H9.5"/></svg>
<svg style="left:1727px;top:1019px" width="14" height="13" fill="none" stroke="#333" stroke-width="1.2"><rect x="0.5" y="0.5" width="13" height="12"/><path d="M0.5 6.5 H7 V0.5"/></svg>
<div style="position:absolute;left:1758px;top:1024.5px;width:7px;height:1.2px;background:#333;"></div>
<div style="position:absolute;left:1770px;top:1025px;width:94px;height:1px;background:#444;"></div>
<div style="position:absolute;left:1810px;top:1020px;width:4px;height:11px;background:#333;border-radius:1px;"></div>
<div style="position:absolute;left:1816px;top:1022px;width:1px;height:6px;background:#444;"></div>
<svg style="left:1868px;top:1021px" width="8" height="8" fill="none" stroke="#333" stroke-width="1.2"><path d="M4 0 V8 M0 4 H8"/></svg>
<div class="t" style="left:1887px;top:1020.5px;font-size:11px;color:#222;font-weight:normal;transform:scaleX(0.8989);transform-origin:left;-webkit-text-stroke:0.25px #222;">90%</div>
<svg style="left:0;top:1035px" width="1920" height="45" shape-rendering="crispEdges"><filter id="nz" color-interpolation-filters="sRGB" x="0" y="0" width="100%" height="100%" filterUnits="userSpaceOnUse"><feTurbulence type="turbulence" baseFrequency="0.6" numOctaves="2" seed="7"/><feColorMatrix values="0 0 0 0 0.58  0 0 0 0 0.87  0 0 0 0 0.83  12 0 0 0 -2.2"/><feComponentTransfer><feFuncA type="discrete" tableValues="0 1"/></feComponentTransfer></filter><rect width="1920" height="45" fill="#a0b0de"/><rect width="1920" height="45" filter="url(#nz)"/></svg>
<div style="position:absolute;left:0px;top:1035px;width:1920px;height:1px;background:#8d9fd0;"></div>
<svg style="left:17px;top:1040px" width="28" height="28"><path d="M5 20 C1 20 1 14 5 13.5 C5.5 9 11 8 13 11 C15 9 20 10 20 14 C23 14.5 23 20 19.5 20 Z" fill="#9cc0f0" stroke="#4a78d0" stroke-width="0.8"/><g stroke="#1f5ee8" stroke-width="1.6" stroke-linecap="round"><path d="M6.5 20.5 V26.5 M3.9 22 L9.1 25 M3.9 25 L9.1 22"/><path d="M15.5 20 V26 M12.9 21.5 L18.1 24.5 M12.9 24.5 L18.1 21.5"/></g><circle cx="19" cy="7.5" r="7" fill="#b5260f"/><text x="19" y="11" font-size="9" fill="#fff" text-anchor="middle" font-family="Liberation Sans">2</text></svg>
<div class="t" style="left:48px;top:1043.5px;font-size:12px;color:#1a1a1a;font-weight:normal;transform:scaleX(0.8973);transform-origin:left;-webkit-text-stroke:0.25px #1a1a1a;">24°F</div>
<div class="t" style="left:48px;top:1058.5px;font-size:12px;color:#333;font-weight:normal;transform:scaleX(0.9292);transform-origin:left;-webkit-text-stroke:0.25px #333;">Snow</div>
<svg style="left:720px;top:1047px" width="22" height="22"><rect x="0" y="0" width="10.5" height="10.5" fill="#1a6fe0"/><rect x="11.5" y="0" width="10.5" height="10.5" fill="#2b8af0"/><rect x="0" y="11.5" width="10.5" height="10.5" fill="#1457c8"/><rect x="11.5" y="11.5" width="10.5" height="10.5" fill="#1a6fe0"/></svg>
<div style="position:absolute;left:755.5px;top:1043.5px;width:204px;height:28.5px;background:#dff9f9;border-radius:14px;border:1px solid #c8eaf0;"></div>
<svg style="left:765px;top:1050px" width="16" height="16" fill="none" stroke="#111" stroke-width="2"><circle cx="6.5" cy="6.5" r="5"/><path d="M10 10 L14.5 14.5"/></svg>
<div class="t" style="left:789px;top:1051px;font-size:13px;color:#222;font-weight:normal;transform:scaleX(0.9389);transform-origin:left;-webkit-text-stroke:0.25px #222;">Search</div>
<svg style="left:914px;top:1047px" width="42" height="20"><rect x="0" y="6" width="13" height="5" fill="#e89a2a" stroke="#8a5a10" stroke-width="0.8"/><rect x="0" y="12" width="13" height="5" fill="#e89a2a" stroke="#8a5a10" stroke-width="0.8"/><path d="M20 5 L24 3 L26 6 L27 18 L19 18 Z" fill="#5fae7a"/><path d="M26 14 L34 18 H22 Z" fill="#2e7a2e"/><rect x="28" y="15" width="6" height="3" fill="#e8c02a"/></svg>
<svg style="left:971px;top:1047px" width="24" height="22"><rect x="7" y="1" width="15" height="14" fill="#dcdcdc" stroke="#aaa" stroke-width="0.5"/><rect x="0" y="7" width="15" height="14" fill="#111"/><rect x="7" y="7" width="8" height="8" fill="#777"/></svg>
<svg style="left:1012px;top:1047px" width="25" height="22"><path d="M0 2 H9 L11 4 H24 V21 H0 Z" fill="#e8a030"/><rect x="0" y="6" width="24" height="15" fill="#f5b541"/><rect x="6" y="15" width="12" height="5" rx="1" fill="#1f54b8"/></svg>
<svg style="left:1053px;top:1045px" width="24" height="25"><ellipse cx="12" cy="12.5" rx="11" ry="12" fill="#d6241a"/><ellipse cx="12" cy="12.5" rx="5" ry="8.5" fill="#9ac8dc"/></svg>
<div style="position:absolute;left:1061px;top:1073px;width:8px;height:2.5px;background:#555;border-radius:1px;"></div>
<svg style="left:1095px;top:1046px" width="22" height="22"><path d="M5 1 H21 V21 H5 Z" fill="#1d8f4a"/><path d="M5 11 H21 V21 H5 Z" fill="#0f5e2c"/><path d="M13 1 H21 V11 H13 Z" fill="#38b060"/><rect x="0" y="8" width="11" height="11" rx="1.5" fill="#0b3d1b"/><text x="5.5" y="17" font-size="9" fill="#fff" text-anchor="middle" font-family="Liberation Sans">x</text></svg>
<div style="position:absolute;left:1102px;top:1073px;width:8px;height:2.5px;background:#555;border-radius:1px;"></div>
<svg style="left:1137px;top:1046px" width="24" height="24"><rect x="0" y="0" width="16" height="16" fill="#f2f2f2"/><path d="M2 2 H13 V13 H2 Z" fill="none" stroke="#d9362a" stroke-width="1.6" stroke-dasharray="3 1.5"/><path d="M10 9 L20 20 M18 8 L11 20" stroke="#1f6ad8" stroke-width="1.4"/><circle cx="21" cy="12" r="2" fill="none" stroke="#1f6ad8" stroke-width="1.2"/><circle cx="11" cy="21" r="2" fill="none" stroke="#1f6ad8" stroke-width="1.2"/></svg>
<svg style="left:1177px;top:1045px" width="28" height="26"><circle cx="12" cy="13" r="11.5" fill="#2433e8"/><path d="M6 9 C8 7.5 10 7.5 12 8 C14 7.5 16 7.5 18 9 C19 11 19.5 14 19 17 C17.5 18 16 18.5 15 18.5 L14 17 C12.5 17.3 11.5 17.3 10 17 L9 18.5 C8 18.5 6.5 18 5 17 C4.5 14 5 11 6 9 Z" fill="#fff"/><circle cx="9.8" cy="13.5" r="1.5" fill="#2433e8"/><circle cx="14.2" cy="13.5" r="1.5" fill="#2433e8"/><circle cx="21" cy="6.5" r="6" fill="#e8402a"/><text x="21" y="10" font-size="9" fill="#fff" text-anchor="middle" font-family="Liberation Sans">6</text></svg>
<div style="position:absolute;left:1185px;top:1073px;width:8px;height:2.5px;background:#555;border-radius:1px;"></div>
<svg style="left:1762px;top:1053px" width="13" height="8" fill="none" stroke="#111" stroke-width="1.4"><path d="M1 7 L6.5 1.5 L12 7"/></svg>
<svg style="left:1790px;top:1049px" width="17" height="17" fill="none" stroke="#111" stroke-width="1.1"><rect x="0.5" y="1.5" width="11" height="9"/><path d="M4 13.5 H9 M6.5 10.5 V13.5"/><rect x="12.5" y="0.5" width="3.5" height="4.5" rx="1"/><path d="M14.2 5 V15"/></svg>
<svg style="left:1812px;top:1049px" width="18" height="16" fill="none" stroke="#111" stroke-width="1.1"><path d="M1 5.5 H4 L8 2 V14 L4 10.5 H1 Z"/><path d="M10.5 5.5 C11.8 7 11.8 9 10.5 10.5 M12.5 3.5 C15 6 15 10 12.5 12.5 M14.5 1.5 C18 5 18 11 14.5 14.5"/></svg>
<div class="t" style="left:1862px;top:1044px;font-size:12px;color:#111;font-weight:normal;transform:scaleX(0.9147);transform-origin:left;-webkit-text-stroke:0.25px #111;">3:59 PM</div>
<div class="t" style="left:1844px;top:1059px;font-size:12px;color:#111;font-weight:normal;transform:scaleX(0.9814);transform-origin:left;-webkit-text-stroke:0.25px #111;">12/30/2025</div>
<div style="position:absolute;left:1900px;top:203px;width:20px;height:782px;background:#dadada;"></div>
<svg style="left:1906px;top:208px" width="9" height="7"><polygon points="4.5,0 9,7 0,7" fill="#333"/></svg>
<svg style="left:1906.5px;top:975px" width="9" height="7"><polygon points="0,0 9,0 4.5,7" fill="#333"/></svg>
<div style="position:absolute;left:1906px;top:586px;width:9px;height:350px;background:#303030;border-radius:4.5px;"></div>
</body></html>
